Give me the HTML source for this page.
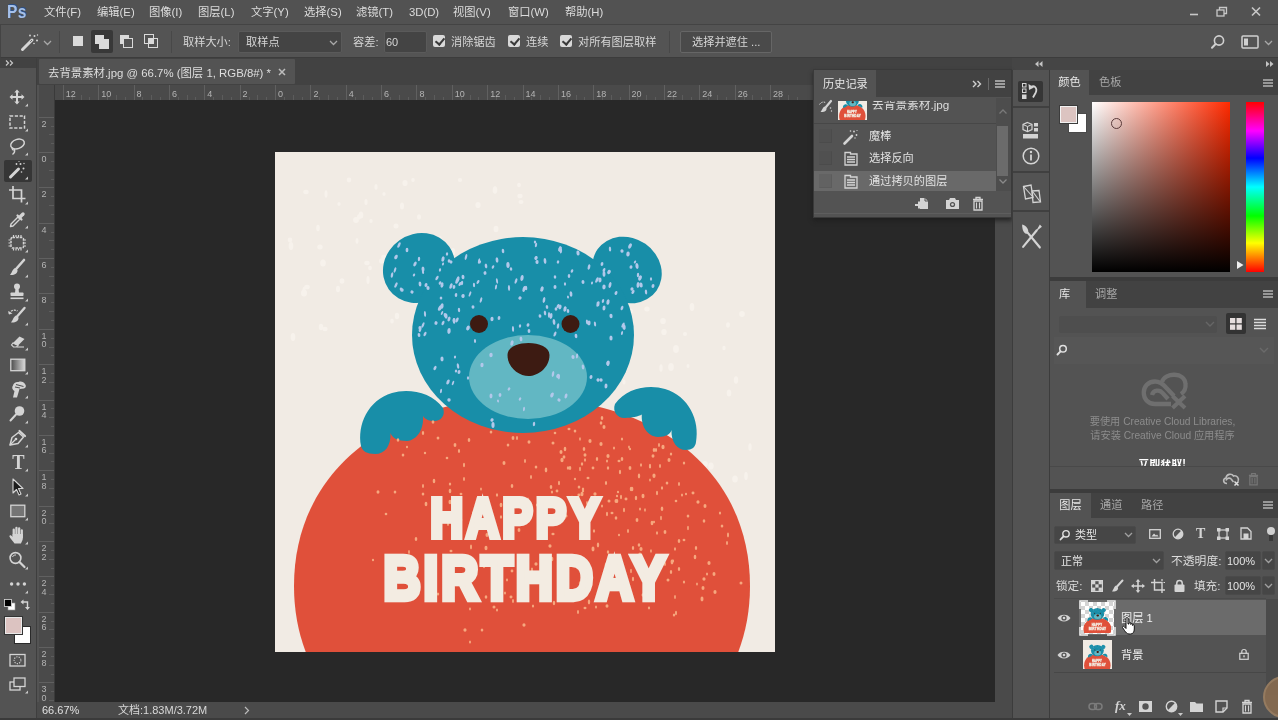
<!DOCTYPE html>
<html lang="zh-CN">
<head>
<meta charset="utf-8">
<title>去背景素材.jpg @ 66.7% (图层 1, RGB/8#) *</title>
<style>
*{box-sizing:border-box;margin:0;padding:0}
html,body{width:1278px;height:720px;overflow:hidden;background:#535353}
body{will-change:transform;position:relative;font-family:"Liberation Sans","Noto Sans CJK SC",sans-serif;font-size:11.200px;color:#d8d8d8;line-height:1}
.abs{position:absolute}
.t{position:absolute;white-space:nowrap;line-height:14px;height:14px}
svg{position:absolute;overflow:visible}
/* menubar */
#menubar{left:0;top:0;width:1278px;height:25px;background:#525252;border-bottom:1px solid #444}
#menubar .t{top:5px;font-size:11.300px;color:#dcdcdc}
#ps{left:7px;top:1px;font-size:18px;font-weight:bold;color:#a4c0ea;line-height:22px;height:22px;letter-spacing:0.500px;transform:scaleX(.86);transform-origin:0 0;text-shadow:1px -1px 0 #2c4f86}
/* options bar */
#optbar{left:0;top:25px;width:1278px;height:33px;background:#545454;border-bottom:1px solid #3c3c3c;border-left:1px solid #444}
#optbar .t{top:10px;color:#d6d6d6}
.field{position:absolute;background:#444;border:1px solid #5a5a5a;border-radius:2px}
.cb{position:absolute;width:12px;height:12px;background:#d9d9d9;border-radius:2px}
.cb::after{content:"";position:absolute;left:3.5px;top:1px;width:4px;height:7px;border:solid #3a3a3a;border-width:0 2px 2px 0;transform:rotate(40deg)}
.vsep{position:absolute;width:1px;background:#484848}
/* tab bar */
#tabbar{left:37px;top:58px;width:975px;height:27px;background:#424242}
#doctab{left:2px;top:1px;width:256px;height:25px;background:#535353;border-radius:1px}
/* tools */
#tools{left:0;top:58px;width:37px;height:662px;background:#535353;border-right:1px solid #3e3e3e}
#toolhdr{left:0;top:0;width:36px;height:10px;background:#424242}
/* rulers */
#hruler{left:39px;top:85px;width:956px;height:16px;background:#4a4a4a;border-bottom:1px solid #3a3a3a;overflow:hidden}
#vruler{left:39px;top:100px;width:16px;height:602px;background:#4a4a4a;border-right:1px solid #3a3a3a;overflow:hidden}
.rn{position:absolute;font-size:9px;color:#b4b4b4;line-height:10px}
/* canvas */
#canvas{left:55px;top:100px;width:940px;height:602px;background:#282828}
#vscroll{left:995px;top:85px;width:17px;height:617px;background:#4a4a4a}
#statusbar{left:37px;top:702px;width:975px;height:18px;background:#4a4a4a}
/* dock */
#iconcol{left:1012px;top:70px;width:38px;height:650px;background:#535353;border-left:1px solid #3c3c3c;border-right:1px solid #3c3c3c}
#right{left:1050px;top:70px;width:228px;height:650px;background:#535353;overflow:hidden}
.ptabbar{position:absolute;left:0;width:228px;height:25px;background:#424242}
.ptab{position:absolute;top:0;height:25px;background:#535353;color:#e6e6e6;text-align:center;line-height:25px;font-size:11.200px}
.ptabi{position:absolute;top:0;height:25px;color:#a6a6a6;line-height:25px;font-size:11.200px}
</style>
</head>
<body>
<div id="menubar" class="abs">
 <div id="ps" class="abs">Ps</div>
 <span class="t" style="left:44px">文件(F)</span>
 <span class="t" style="left:97px">编辑(E)</span>
 <span class="t" style="left:149px">图像(I)</span>
 <span class="t" style="left:198px">图层(L)</span>
 <span class="t" style="left:251px">文字(Y)</span>
 <span class="t" style="left:304px">选择(S)</span>
 <span class="t" style="left:356px">滤镜(T)</span>
 <span class="t" style="left:409px">3D(D)</span>
 <span class="t" style="left:453px">视图(V)</span>
 <span class="t" style="left:508px">窗口(W)</span>
 <span class="t" style="left:565px">帮助(H)</span>
 <svg style="left:1188px;top:6px" width="80" height="14" viewBox="0 0 80 14"><path d="M2 8.5 H10" stroke="#c8c8c8" stroke-width="1.6"/><rect x="29" y="4" width="7" height="6" fill="none" stroke="#c8c8c8" stroke-width="1.3"/><path d="M31.5 4 V1.5 H38.5 V7.5 H36" fill="none" stroke="#c8c8c8" stroke-width="1.3"/><path d="M64 1.5 L72 9.5 M72 1.5 L64 9.5" stroke="#c8c8c8" stroke-width="1.6"/></svg>
</div>
<div id="optbar" class="abs">
 <!-- wand icon -->
 <svg style="left:19px;top:8px" width="20" height="18" viewBox="0 0 20 18"><path d="M2.5 16.5 L12 7" stroke="#d6d6d6" stroke-width="3" stroke-linecap="round"/><path d="M10.2 8.8 L12 7" stroke="#6a6a6a" stroke-width="1" /><g fill="#d6d6d6"><circle cx="14.5" cy="3" r="1"/><circle cx="17" cy="7.5" r="1"/><circle cx="10" cy="2.5" r=".9"/><circle cx="14" cy="10.5" r=".8"/><circle cx="17.5" cy="2" r=".7"/></g></svg>
 <svg style="left:42px;top:15px" width="9" height="6" viewBox="0 0 9 6"><path d="M1 1 L4.5 4.5 L8 1" fill="none" stroke="#a8a8a8" stroke-width="1.3"/></svg>
 <div class="vsep" style="left:58px;top:6px;height:22px"></div>
 <div class="abs" style="left:71.500px;top:11px;width:10px;height:10px;background:#dadada"></div>
 <div class="abs" style="left:90px;top:5px;width:22px;height:23px;background:#383838;border-radius:2px"></div>
 <div class="abs" style="left:94px;top:10px;width:9px;height:9px;background:#dadada"></div>
 <div class="abs" style="left:98px;top:14px;width:10px;height:10px;background:#dadada"></div>
 <div class="abs" style="left:119px;top:10px;width:9px;height:9px;background:#dadada"></div>
 <div class="abs" style="left:122px;top:13px;width:10px;height:10px;background:#545454;border:1.5px solid #dadada"></div>
 <div class="abs" style="left:143px;top:9px;width:10px;height:10px;border:1.5px solid #dadada"></div>
 <div class="abs" style="left:147px;top:13px;width:10px;height:10px;border:1.5px solid #dadada"></div>
 <div class="abs" style="left:148px;top:14px;width:4px;height:4px;background:#dadada"></div>
 <div class="vsep" style="left:170px;top:6px;height:22px"></div>
 <span class="t" style="left:182px">取样大小:</span>
 <div class="field" style="left:237px;top:6px;width:104px;height:22px"></div>
 <span class="t" style="left:245px">取样点</span>
 <svg style="left:328px;top:15px" width="9" height="6" viewBox="0 0 9 6"><path d="M1 1 L4.5 4.5 L8 1" fill="none" stroke="#a8a8a8" stroke-width="1.3"/></svg>
 <span class="t" style="left:352px">容差:</span>
 <div class="field" style="left:383px;top:6px;width:43px;height:22px"></div>
 <span class="t" style="left:385px;font-size:11px">60</span>
 <div class="cb" style="left:432px;top:10px"></div>
 <span class="t" style="left:450px">消除锯齿</span>
 <div class="cb" style="left:507px;top:10px"></div>
 <span class="t" style="left:525px">连续</span>
 <div class="cb" style="left:559px;top:10px"></div>
 <span class="t" style="left:577px">对所有图层取样</span>
 <div class="vsep" style="left:668px;top:6px;height:22px"></div>
 <div class="field" style="left:679px;top:6px;width:92px;height:22px;background:#4a4a4a;border-color:#666"></div>
 <span class="t" style="left:691px">选择并遮住 ...</span>
 <!-- search -->
 <svg style="left:1209px;top:9px" width="16" height="16" viewBox="0 0 16 16"><circle cx="9" cy="6.5" r="4.6" fill="none" stroke="#d0d0d0" stroke-width="1.6"/><path d="M5.6 10 L2 13.8" stroke="#d0d0d0" stroke-width="2" stroke-linecap="round"/></svg>
 <svg style="left:1240px;top:10px" width="18" height="14" viewBox="0 0 18 14"><rect x="1" y="1" width="16" height="12" rx="1" fill="none" stroke="#d0d0d0" stroke-width="1.5"/><rect x="3" y="3.5" width="4" height="7" fill="#d0d0d0"/></svg>
 <svg style="left:1263px;top:15px" width="9" height="6" viewBox="0 0 9 6"><path d="M1 1 L4.5 4.5 L8 1" fill="none" stroke="#a8a8a8" stroke-width="1.3"/></svg>
</div>
<div id="tools" class="abs"><div id="toolhdr" class="abs"></div><svg style="left:5px;top:2px" width="9" height="6" viewBox="0 0 9 6"><path d="M1 .5 L3.500 3 L1 5.500 M5 .5 L7.500 3 L5 5.500" fill="none" stroke="#c8c8c8" stroke-width="1.200"/></svg>
<svg style="left:5px;top:27.0px" width="24" height="24" viewBox="0 0 24 24"><g fill="#d4d4d4"><path d="M12 4.500 L14.700 7.500 H13 V11 H16.500 V9.300 L19.500 12 L16.500 14.700 V13 H13 V16.500 H14.700 L12 19.500 L9.300 16.500 H11 V13 H7.500 V14.700 L4.500 12 L7.500 9.300 V11 H11 V7.500 H9.300 Z"/></g><path d="M23 18.5 V21.5 H20 Z" fill="#c8c8c8"/></svg>
<svg style="left:5px;top:51.5px" width="24" height="24" viewBox="0 0 24 24"><rect x="5" y="6" width="14.5" height="12" fill="none" stroke="#d4d4d4" stroke-width="1.5" stroke-dasharray="3.2 1.6"/><path d="M23 18.5 V21.5 H20 Z" fill="#c8c8c8"/></svg>
<svg style="left:5px;top:76.0px" width="24" height="24" viewBox="0 0 24 24"><ellipse cx="12.5" cy="10" rx="7" ry="4.6" transform="rotate(-18 12.5 10)" fill="none" stroke="#d4d4d4" stroke-width="1.5"/><path d="M7.5 13.5 C6.500 15 8 16.500 9.5 15.5 C10 17.500 9 19.500 7.500 20.500" fill="none" stroke="#d4d4d4" stroke-width="1.4"/><path d="M23 18.5 V21.5 H20 Z" fill="#c8c8c8"/></svg>
<div class="abs" style="left:4px;top:101.5px;width:28px;height:22px;background:#363636;border-radius:2px"></div><svg style="left:5px;top:100.0px" width="24" height="24" viewBox="0 0 24 24"><path d="M5.500 19 L13.5 11" stroke="#d4d4d4" stroke-width="3" stroke-linecap="round"/><g fill="#d4d4d4"><circle cx="15.500" cy="6" r="1"/><circle cx="18.5" cy="10.500" r="1"/><circle cx="11.500" cy="6" r=".9"/><circle cx="16.500" cy="14" r=".8"/><circle cx="19" cy="5.500" r=".7"/><circle cx="14" cy="3.5" r=".6"/></g><path d="M23 18.5 V21.5 H20 Z" fill="#c8c8c8"/></svg>
<svg style="left:5px;top:124.5px" width="24" height="24" viewBox="0 0 24 24"><path d="M8 3 V15.500 H20.500 M4 7 H16.500 V19.500" fill="none" stroke="#d4d4d4" stroke-width="1.700"/><path d="M23 18.5 V21.5 H20 Z" fill="#c8c8c8"/></svg>
<svg style="left:5px;top:149.0px" width="24" height="24" viewBox="0 0 24 24"><path d="M5.500 19.500 L6 17 L13 10 L15 12 L8 19 Z" fill="none" stroke="#d4d4d4" stroke-width="1.4" stroke-linejoin="round"/><path d="M12.500 8.500 L16.500 12.500" stroke="#d4d4d4" stroke-width="2.2" stroke-linecap="round"/><path d="M15 10 L18 7" stroke="#d4d4d4" stroke-width="3.400" stroke-linecap="round"/><path d="M23 18.5 V21.5 H20 Z" fill="#c8c8c8"/></svg>
<svg style="left:5px;top:173.0px" width="24" height="24" viewBox="0 0 24 24"><rect x="6" y="6.500" width="12.5" height="10.5" rx="1.5" fill="none" stroke="#d4d4d4" stroke-width="1.500" stroke-dasharray="2.600 1"/><g stroke="#d4d4d4" stroke-width="1.2"><path d="M8.500 4 V6 M11 4 V6 M13.500 4 V6 M16 4 V6 M8.500 17.500 V19.500 M11 17.500 V19.500 M13.500 17.500 V19.500 M16 17.500 V19.500 M3.500 9 H5.500 M3.500 12 H5.500 M3.500 15 H5.500 M19 9 H21 M19 12 H21 M19 15 H21"/></g><path d="M23 18.5 V21.5 H20 Z" fill="#c8c8c8"/></svg>
<svg style="left:5px;top:197.5px" width="24" height="24" viewBox="0 0 24 24"><path d="M19 4 L11.500 12.500" stroke="#d4d4d4" stroke-width="2.600" stroke-linecap="round"/><path d="M10.500 12 C7.500 12.500 7.500 16 5 19 C9 19.500 13 17.500 12.500 14 Z" fill="#d4d4d4"/><path d="M23 18.5 V21.5 H20 Z" fill="#c8c8c8"/></svg>
<svg style="left:5px;top:222.0px" width="24" height="24" viewBox="0 0 24 24"><g fill="#d4d4d4"><circle cx="12" cy="6.500" r="3"/><path d="M10.500 8 H13.500 L14 13 H10 Z"/><rect x="5.500" y="12.500" width="13" height="3.500" rx="0.800"/><rect x="5.500" y="17.500" width="13" height="1.600"/></g><path d="M23 18.5 V21.5 H20 Z" fill="#c8c8c8"/></svg>
<svg style="left:5px;top:246.0px" width="24" height="24" viewBox="0 0 24 24"><path d="M19.500 4 L12.500 12" stroke="#d4d4d4" stroke-width="2.400" stroke-linecap="round"/><path d="M11.500 11.500 C8.500 12 8.500 15.500 6 18.500 C10 19 14 17 13.500 13.500 Z" fill="#d4d4d4"/><path d="M4 9.500 C6 6 10 5.500 12.500 7" fill="none" stroke="#d4d4d4" stroke-width="1.300" stroke-dasharray="2 1"/><path d="M3 7 L4 10.500 L7.500 9.500 Z" fill="#d4d4d4"/><path d="M23 18.5 V21.5 H20 Z" fill="#c8c8c8"/></svg>
<svg style="left:5px;top:270.5px" width="24" height="24" viewBox="0 0 24 24"><path d="M8 14 L14.500 7.500 L19.500 10 L13 16.500 Z" fill="#d4d4d4"/><path d="M8 14 L13 16.500 L11.500 18 H8.500 L6.500 16 Z" fill="none" stroke="#d4d4d4" stroke-width="1.100"/><path d="M12 18 H19" stroke="#d4d4d4" stroke-width="1.100"/><path d="M23 18.5 V21.5 H20 Z" fill="#c8c8c8"/></svg>
<svg style="left:5px;top:295.0px" width="24" height="24" viewBox="0 0 24 24"><defs><linearGradient id="tg" x1="0" x2="1"><stop offset="0" stop-color="#4a4a4a"/><stop offset="1" stop-color="#d8d8d8"/></linearGradient></defs><rect x="5.800" y="6.200" width="14" height="11.500" fill="url(#tg)" stroke="#d4d4d4" stroke-width="1.300"/><path d="M23 18.5 V21.5 H20 Z" fill="#c8c8c8"/></svg>
<svg style="left:5px;top:319.0px" width="24" height="24" viewBox="0 0 24 24"><path d="M8 20.500 L9.500 14 C7.500 13 6.500 10.500 8 8.500 C8.500 6 11 4.500 13.500 5 C16 4 19 5 20 7 C21.500 8.500 21 11 19 11.500 L14.500 12 L12 20.500 Z" fill="#d4d4d4"/><path d="M11 7.500 L18.500 9.500 M10 10 L15 11" stroke="#535353" stroke-width="1.100"/><path d="M23 18.5 V21.5 H20 Z" fill="#c8c8c8"/></svg>
<svg style="left:5px;top:343.5px" width="24" height="24" viewBox="0 0 24 24"><circle cx="14.500" cy="9" r="4.800" fill="#d4d4d4"/><path d="M11 12.500 L5.500 18.500" stroke="#d4d4d4" stroke-width="2" stroke-linecap="round"/><path d="M23 18.5 V21.5 H20 Z" fill="#c8c8c8"/></svg>
<svg style="left:5px;top:368.0px" width="24" height="24" viewBox="0 0 24 24"><path d="M5 19 L7 11.500 L13.500 6.500 L18.500 11 L13 17.500 Z" fill="none" stroke="#d4d4d4" stroke-width="1.500" stroke-linejoin="round"/><path d="M5 19 L10.500 13.500" stroke="#d4d4d4" stroke-width="1.200"/><circle cx="11" cy="13" r="1.300" fill="#d4d4d4"/><path d="M14.500 5 L20 10" stroke="#d4d4d4" stroke-width="2.200" stroke-linecap="round"/><path d="M23 18.5 V21.5 H20 Z" fill="#c8c8c8"/></svg>
<svg style="left:5px;top:392.0px" width="24" height="24" viewBox="0 0 24 24"><text x="15" y="19" text-anchor="middle" transform="scale(.9 1)" font-family="Liberation Serif,serif" font-size="20.500" font-weight="bold" fill="#d4d4d4">T</text><path d="M23 18.5 V21.5 H20 Z" fill="#c8c8c8"/></svg>
<svg style="left:5px;top:417.0px" width="24" height="24" viewBox="0 0 24 24"><path d="M8 4 V18 L11.500 14.500 L14 20 L16 19 L13.500 13.500 H18 Z" fill="#1c1c1c" stroke="#d4d4d4" stroke-width="1.100" stroke-linejoin="round"/><path d="M23 18.5 V21.5 H20 Z" fill="#c8c8c8"/></svg>
<svg style="left:5px;top:441.0px" width="24" height="24" viewBox="0 0 24 24"><rect x="5.800" y="6.200" width="14" height="11.500" fill="#757575" stroke="#d4d4d4" stroke-width="1.300"/><path d="M23 18.5 V21.5 H20 Z" fill="#c8c8c8"/></svg>
<svg style="left:5px;top:465.0px" width="24" height="24" viewBox="0 0 24 24"><g fill="#d4d4d4"><rect x="7.600" y="5.500" width="2.300" height="9" rx="1.150"/><rect x="10.300" y="3.800" width="2.300" height="10" rx="1.150"/><rect x="13" y="4.300" width="2.300" height="10" rx="1.150"/><rect x="15.700" y="6.300" width="2.200" height="9" rx="1.100"/><path d="M7.600 11 H17.900 V14.500 C17.900 17.500 16.500 19 16 20.500 H9.500 C8 18 5.500 16 4.300 13.200 C4.800 11.800 6.300 12.200 7.600 14 Z"/></g><path d="M23 18.5 V21.5 H20 Z" fill="#c8c8c8"/></svg>
<svg style="left:5px;top:489.5px" width="24" height="24" viewBox="0 0 24 24"><circle cx="10.500" cy="10" r="5.400" fill="none" stroke="#d4d4d4" stroke-width="1.600"/><path d="M14.500 14 L19.500 19" stroke="#d4d4d4" stroke-width="2.200" stroke-linecap="round"/><path d="M7.500 9 C8 7.500 9.500 6.800 11 7" fill="none" stroke="#d4d4d4" stroke-width="1"/><path d="M23 18.5 V21.5 H20 Z" fill="#c8c8c8"/></svg>
<svg style="left:5px;top:514.0px" width="24" height="24" viewBox="0 0 24 24"><g fill="#d4d4d4"><circle cx="6.600" cy="12" r="1.700"/><circle cx="13" cy="12" r="1.700"/><circle cx="19.400" cy="12" r="1.700"/></g><path d="M23 18.5 V21.5 H20 Z" fill="#c8c8c8"/></svg>
<svg style="left:3px;top:540px" width="30" height="14" viewBox="0 0 30 14"><rect x="5" y="5" width="7" height="7" fill="#fff" stroke="#999" stroke-width=".600"/><rect x="1.500" y="1.500" width="7" height="7" fill="#000" stroke="#ddd" stroke-width=".800"/><path d="M19.500 4 H24.500 V10" fill="none" stroke="#d4d4d4" stroke-width="1.400"/><path d="M20.500 1.500 L17.500 4 L20.500 6.500 Z M22 9 L24.500 12 L27 9 Z" fill="#d4d4d4"/></svg>
<div class="abs" style="left:14px;top:567.5px;width:17px;height:18px;background:#fff;border:1px solid #2a2a2a"></div><div class="abs" style="left:5px;top:558.5px;width:17px;height:17px;background:#dcc3c1;border:1px solid #e8e8e8;box-shadow:0 0 0 1px #333"></div>
<svg style="left:5px;top:590px" width="24" height="24" viewBox="0 0 24 24"><rect x="5" y="6.500" width="15" height="11.500" fill="none" stroke="#d4d4d4" stroke-width="1.300"/><circle cx="12.500" cy="12.200" r="3.400" fill="none" stroke="#d4d4d4" stroke-width="1.100" stroke-dasharray="1.200 1.200"/></svg>
<svg style="left:5px;top:614px" width="24" height="24" viewBox="0 0 24 24"><rect x="5" y="10" width="10" height="8" fill="none" stroke="#d4d4d4" stroke-width="1.300"/><rect x="9" y="6" width="11" height="8.500" fill="#535353" stroke="#d4d4d4" stroke-width="1.300"/><path d="M23 18.500 V21.500 H20 Z" fill="#c8c8c8"/></svg>
</div>
<div id="tabbar" class="abs"><div id="doctab" class="abs"></div><span class="t" style="left:11px;top:8px;color:#dedede;font-size:11.400px">去背景素材.jpg @ 66.7% (图层 1, RGB/8#) *</span><svg style="left:241px;top:10px" width="8" height="8" viewBox="0 0 8 8"><path d="M1 1 L7 7 M7 1 L1 7" stroke="#bdbdbd" stroke-width="1.500"/></svg></div>
<div id="hruler" class="abs"><div class="abs" style="left:23.8px;top:0;width:1px;height:15px;background:#606060"></div><span class="rn" style="left:26.8px;top:4px">12</span><div class="abs" style="left:32.7px;top:12px;width:1px;height:3px;background:#5c5c5c"></div><div class="abs" style="left:41.5px;top:10px;width:1px;height:5px;background:#5c5c5c"></div><div class="abs" style="left:50.4px;top:12px;width:1px;height:3px;background:#5c5c5c"></div><div class="abs" style="left:59.2px;top:0;width:1px;height:15px;background:#606060"></div><span class="rn" style="left:62.2px;top:4px">10</span><div class="abs" style="left:68.0px;top:12px;width:1px;height:3px;background:#5c5c5c"></div><div class="abs" style="left:76.9px;top:10px;width:1px;height:5px;background:#5c5c5c"></div><div class="abs" style="left:85.7px;top:12px;width:1px;height:3px;background:#5c5c5c"></div><div class="abs" style="left:94.6px;top:0;width:1px;height:15px;background:#606060"></div><span class="rn" style="left:97.6px;top:4px">8</span><div class="abs" style="left:103.4px;top:12px;width:1px;height:3px;background:#5c5c5c"></div><div class="abs" style="left:112.2px;top:10px;width:1px;height:5px;background:#5c5c5c"></div><div class="abs" style="left:121.1px;top:12px;width:1px;height:3px;background:#5c5c5c"></div><div class="abs" style="left:129.9px;top:0;width:1px;height:15px;background:#606060"></div><span class="rn" style="left:132.9px;top:4px">6</span><div class="abs" style="left:138.8px;top:12px;width:1px;height:3px;background:#5c5c5c"></div><div class="abs" style="left:147.6px;top:10px;width:1px;height:5px;background:#5c5c5c"></div><div class="abs" style="left:156.4px;top:12px;width:1px;height:3px;background:#5c5c5c"></div><div class="abs" style="left:165.3px;top:0;width:1px;height:15px;background:#606060"></div><span class="rn" style="left:168.3px;top:4px">4</span><div class="abs" style="left:174.1px;top:12px;width:1px;height:3px;background:#5c5c5c"></div><div class="abs" style="left:183.0px;top:10px;width:1px;height:5px;background:#5c5c5c"></div><div class="abs" style="left:191.8px;top:12px;width:1px;height:3px;background:#5c5c5c"></div><div class="abs" style="left:200.6px;top:0;width:1px;height:15px;background:#606060"></div><span class="rn" style="left:203.6px;top:4px">2</span><div class="abs" style="left:209.5px;top:12px;width:1px;height:3px;background:#5c5c5c"></div><div class="abs" style="left:218.3px;top:10px;width:1px;height:5px;background:#5c5c5c"></div><div class="abs" style="left:227.2px;top:12px;width:1px;height:3px;background:#5c5c5c"></div><div class="abs" style="left:236.0px;top:0;width:1px;height:15px;background:#606060"></div><span class="rn" style="left:239.0px;top:4px">0</span><div class="abs" style="left:244.8px;top:12px;width:1px;height:3px;background:#5c5c5c"></div><div class="abs" style="left:253.7px;top:10px;width:1px;height:5px;background:#5c5c5c"></div><div class="abs" style="left:262.5px;top:12px;width:1px;height:3px;background:#5c5c5c"></div><div class="abs" style="left:271.4px;top:0;width:1px;height:15px;background:#606060"></div><span class="rn" style="left:274.4px;top:4px">2</span><div class="abs" style="left:280.2px;top:12px;width:1px;height:3px;background:#5c5c5c"></div><div class="abs" style="left:289.0px;top:10px;width:1px;height:5px;background:#5c5c5c"></div><div class="abs" style="left:297.9px;top:12px;width:1px;height:3px;background:#5c5c5c"></div><div class="abs" style="left:306.7px;top:0;width:1px;height:15px;background:#606060"></div><span class="rn" style="left:309.7px;top:4px">4</span><div class="abs" style="left:315.6px;top:12px;width:1px;height:3px;background:#5c5c5c"></div><div class="abs" style="left:324.4px;top:10px;width:1px;height:5px;background:#5c5c5c"></div><div class="abs" style="left:333.2px;top:12px;width:1px;height:3px;background:#5c5c5c"></div><div class="abs" style="left:342.1px;top:0;width:1px;height:15px;background:#606060"></div><span class="rn" style="left:345.1px;top:4px">6</span><div class="abs" style="left:350.9px;top:12px;width:1px;height:3px;background:#5c5c5c"></div><div class="abs" style="left:359.8px;top:10px;width:1px;height:5px;background:#5c5c5c"></div><div class="abs" style="left:368.6px;top:12px;width:1px;height:3px;background:#5c5c5c"></div><div class="abs" style="left:377.4px;top:0;width:1px;height:15px;background:#606060"></div><span class="rn" style="left:380.4px;top:4px">8</span><div class="abs" style="left:386.3px;top:12px;width:1px;height:3px;background:#5c5c5c"></div><div class="abs" style="left:395.1px;top:10px;width:1px;height:5px;background:#5c5c5c"></div><div class="abs" style="left:404.0px;top:12px;width:1px;height:3px;background:#5c5c5c"></div><div class="abs" style="left:412.8px;top:0;width:1px;height:15px;background:#606060"></div><span class="rn" style="left:415.8px;top:4px">10</span><div class="abs" style="left:421.6px;top:12px;width:1px;height:3px;background:#5c5c5c"></div><div class="abs" style="left:430.5px;top:10px;width:1px;height:5px;background:#5c5c5c"></div><div class="abs" style="left:439.3px;top:12px;width:1px;height:3px;background:#5c5c5c"></div><div class="abs" style="left:448.2px;top:0;width:1px;height:15px;background:#606060"></div><span class="rn" style="left:451.2px;top:4px">12</span><div class="abs" style="left:457.0px;top:12px;width:1px;height:3px;background:#5c5c5c"></div><div class="abs" style="left:465.8px;top:10px;width:1px;height:5px;background:#5c5c5c"></div><div class="abs" style="left:474.7px;top:12px;width:1px;height:3px;background:#5c5c5c"></div><div class="abs" style="left:483.5px;top:0;width:1px;height:15px;background:#606060"></div><span class="rn" style="left:486.5px;top:4px">14</span><div class="abs" style="left:492.4px;top:12px;width:1px;height:3px;background:#5c5c5c"></div><div class="abs" style="left:501.2px;top:10px;width:1px;height:5px;background:#5c5c5c"></div><div class="abs" style="left:510.0px;top:12px;width:1px;height:3px;background:#5c5c5c"></div><div class="abs" style="left:518.9px;top:0;width:1px;height:15px;background:#606060"></div><span class="rn" style="left:521.9px;top:4px">16</span><div class="abs" style="left:527.7px;top:12px;width:1px;height:3px;background:#5c5c5c"></div><div class="abs" style="left:536.6px;top:10px;width:1px;height:5px;background:#5c5c5c"></div><div class="abs" style="left:545.4px;top:12px;width:1px;height:3px;background:#5c5c5c"></div><div class="abs" style="left:554.2px;top:0;width:1px;height:15px;background:#606060"></div><span class="rn" style="left:557.2px;top:4px">18</span><div class="abs" style="left:563.1px;top:12px;width:1px;height:3px;background:#5c5c5c"></div><div class="abs" style="left:571.9px;top:10px;width:1px;height:5px;background:#5c5c5c"></div><div class="abs" style="left:580.8px;top:12px;width:1px;height:3px;background:#5c5c5c"></div><div class="abs" style="left:589.6px;top:0;width:1px;height:15px;background:#606060"></div><span class="rn" style="left:592.6px;top:4px">20</span><div class="abs" style="left:598.4px;top:12px;width:1px;height:3px;background:#5c5c5c"></div><div class="abs" style="left:607.3px;top:10px;width:1px;height:5px;background:#5c5c5c"></div><div class="abs" style="left:616.1px;top:12px;width:1px;height:3px;background:#5c5c5c"></div><div class="abs" style="left:625.0px;top:0;width:1px;height:15px;background:#606060"></div><span class="rn" style="left:628.0px;top:4px">22</span><div class="abs" style="left:633.8px;top:12px;width:1px;height:3px;background:#5c5c5c"></div><div class="abs" style="left:642.6px;top:10px;width:1px;height:5px;background:#5c5c5c"></div><div class="abs" style="left:651.5px;top:12px;width:1px;height:3px;background:#5c5c5c"></div><div class="abs" style="left:660.3px;top:0;width:1px;height:15px;background:#606060"></div><span class="rn" style="left:663.3px;top:4px">24</span><div class="abs" style="left:669.2px;top:12px;width:1px;height:3px;background:#5c5c5c"></div><div class="abs" style="left:678.0px;top:10px;width:1px;height:5px;background:#5c5c5c"></div><div class="abs" style="left:686.8px;top:12px;width:1px;height:3px;background:#5c5c5c"></div><div class="abs" style="left:695.7px;top:0;width:1px;height:15px;background:#606060"></div><span class="rn" style="left:698.7px;top:4px">26</span><div class="abs" style="left:704.5px;top:12px;width:1px;height:3px;background:#5c5c5c"></div><div class="abs" style="left:713.4px;top:10px;width:1px;height:5px;background:#5c5c5c"></div><div class="abs" style="left:722.2px;top:12px;width:1px;height:3px;background:#5c5c5c"></div><div class="abs" style="left:731.0px;top:0;width:1px;height:15px;background:#606060"></div><span class="rn" style="left:734.0px;top:4px">28</span><div class="abs" style="left:739.9px;top:12px;width:1px;height:3px;background:#5c5c5c"></div><div class="abs" style="left:748.7px;top:10px;width:1px;height:5px;background:#5c5c5c"></div><div class="abs" style="left:757.6px;top:12px;width:1px;height:3px;background:#5c5c5c"></div></div>
<div class="abs" style="left:39px;top:85px;width:16px;height:16px;background:#4a4a4a;border-right:1px solid #3a3a3a;border-bottom:1px solid #3a3a3a"></div>
<div id="vruler" class="abs"><div class="abs" style="left:0;top:16.6px;width:15px;height:1px;background:#606060"></div><span class="rn" style="left:2.500px;top:18.6px">2</span><div class="abs" style="left:12px;top:25.5px;width:3px;height:1px;background:#5c5c5c"></div><div class="abs" style="left:10px;top:34.3px;width:5px;height:1px;background:#5c5c5c"></div><div class="abs" style="left:12px;top:43.2px;width:3px;height:1px;background:#5c5c5c"></div><div class="abs" style="left:0;top:52.0px;width:15px;height:1px;background:#606060"></div><span class="rn" style="left:2.500px;top:54.0px">0</span><div class="abs" style="left:12px;top:60.8px;width:3px;height:1px;background:#5c5c5c"></div><div class="abs" style="left:10px;top:69.7px;width:5px;height:1px;background:#5c5c5c"></div><div class="abs" style="left:12px;top:78.5px;width:3px;height:1px;background:#5c5c5c"></div><div class="abs" style="left:0;top:87.4px;width:15px;height:1px;background:#606060"></div><span class="rn" style="left:2.500px;top:89.4px">2</span><div class="abs" style="left:12px;top:96.2px;width:3px;height:1px;background:#5c5c5c"></div><div class="abs" style="left:10px;top:105.0px;width:5px;height:1px;background:#5c5c5c"></div><div class="abs" style="left:12px;top:113.9px;width:3px;height:1px;background:#5c5c5c"></div><div class="abs" style="left:0;top:122.7px;width:15px;height:1px;background:#606060"></div><span class="rn" style="left:2.500px;top:124.7px">4</span><div class="abs" style="left:12px;top:131.6px;width:3px;height:1px;background:#5c5c5c"></div><div class="abs" style="left:10px;top:140.4px;width:5px;height:1px;background:#5c5c5c"></div><div class="abs" style="left:12px;top:149.2px;width:3px;height:1px;background:#5c5c5c"></div><div class="abs" style="left:0;top:158.1px;width:15px;height:1px;background:#606060"></div><span class="rn" style="left:2.500px;top:160.1px">6</span><div class="abs" style="left:12px;top:166.9px;width:3px;height:1px;background:#5c5c5c"></div><div class="abs" style="left:10px;top:175.8px;width:5px;height:1px;background:#5c5c5c"></div><div class="abs" style="left:12px;top:184.6px;width:3px;height:1px;background:#5c5c5c"></div><div class="abs" style="left:0;top:193.4px;width:15px;height:1px;background:#606060"></div><span class="rn" style="left:2.500px;top:195.4px">8</span><div class="abs" style="left:12px;top:202.3px;width:3px;height:1px;background:#5c5c5c"></div><div class="abs" style="left:10px;top:211.1px;width:5px;height:1px;background:#5c5c5c"></div><div class="abs" style="left:12px;top:220.0px;width:3px;height:1px;background:#5c5c5c"></div><div class="abs" style="left:0;top:228.8px;width:15px;height:1px;background:#606060"></div><span class="rn" style="left:2.500px;top:230.8px">1</span><span class="rn" style="left:2.500px;top:239.3px">0</span><div class="abs" style="left:12px;top:237.6px;width:3px;height:1px;background:#5c5c5c"></div><div class="abs" style="left:10px;top:246.5px;width:5px;height:1px;background:#5c5c5c"></div><div class="abs" style="left:12px;top:255.3px;width:3px;height:1px;background:#5c5c5c"></div><div class="abs" style="left:0;top:264.2px;width:15px;height:1px;background:#606060"></div><span class="rn" style="left:2.500px;top:266.2px">1</span><span class="rn" style="left:2.500px;top:274.7px">2</span><div class="abs" style="left:12px;top:273.0px;width:3px;height:1px;background:#5c5c5c"></div><div class="abs" style="left:10px;top:281.8px;width:5px;height:1px;background:#5c5c5c"></div><div class="abs" style="left:12px;top:290.7px;width:3px;height:1px;background:#5c5c5c"></div><div class="abs" style="left:0;top:299.5px;width:15px;height:1px;background:#606060"></div><span class="rn" style="left:2.500px;top:301.5px">1</span><span class="rn" style="left:2.500px;top:310.0px">4</span><div class="abs" style="left:12px;top:308.4px;width:3px;height:1px;background:#5c5c5c"></div><div class="abs" style="left:10px;top:317.2px;width:5px;height:1px;background:#5c5c5c"></div><div class="abs" style="left:12px;top:326.0px;width:3px;height:1px;background:#5c5c5c"></div><div class="abs" style="left:0;top:334.9px;width:15px;height:1px;background:#606060"></div><span class="rn" style="left:2.500px;top:336.9px">1</span><span class="rn" style="left:2.500px;top:345.4px">6</span><div class="abs" style="left:12px;top:343.7px;width:3px;height:1px;background:#5c5c5c"></div><div class="abs" style="left:10px;top:352.6px;width:5px;height:1px;background:#5c5c5c"></div><div class="abs" style="left:12px;top:361.4px;width:3px;height:1px;background:#5c5c5c"></div><div class="abs" style="left:0;top:370.2px;width:15px;height:1px;background:#606060"></div><span class="rn" style="left:2.500px;top:372.2px">1</span><span class="rn" style="left:2.500px;top:380.7px">8</span><div class="abs" style="left:12px;top:379.1px;width:3px;height:1px;background:#5c5c5c"></div><div class="abs" style="left:10px;top:387.9px;width:5px;height:1px;background:#5c5c5c"></div><div class="abs" style="left:12px;top:396.8px;width:3px;height:1px;background:#5c5c5c"></div><div class="abs" style="left:0;top:405.6px;width:15px;height:1px;background:#606060"></div><span class="rn" style="left:2.500px;top:407.6px">2</span><span class="rn" style="left:2.500px;top:416.1px">0</span><div class="abs" style="left:12px;top:414.4px;width:3px;height:1px;background:#5c5c5c"></div><div class="abs" style="left:10px;top:423.3px;width:5px;height:1px;background:#5c5c5c"></div><div class="abs" style="left:12px;top:432.1px;width:3px;height:1px;background:#5c5c5c"></div><div class="abs" style="left:0;top:441.0px;width:15px;height:1px;background:#606060"></div><span class="rn" style="left:2.500px;top:443.0px">2</span><span class="rn" style="left:2.500px;top:451.5px">2</span><div class="abs" style="left:12px;top:449.8px;width:3px;height:1px;background:#5c5c5c"></div><div class="abs" style="left:10px;top:458.6px;width:5px;height:1px;background:#5c5c5c"></div><div class="abs" style="left:12px;top:467.5px;width:3px;height:1px;background:#5c5c5c"></div><div class="abs" style="left:0;top:476.3px;width:15px;height:1px;background:#606060"></div><span class="rn" style="left:2.500px;top:478.3px">2</span><span class="rn" style="left:2.500px;top:486.8px">4</span><div class="abs" style="left:12px;top:485.2px;width:3px;height:1px;background:#5c5c5c"></div><div class="abs" style="left:10px;top:494.0px;width:5px;height:1px;background:#5c5c5c"></div><div class="abs" style="left:12px;top:502.8px;width:3px;height:1px;background:#5c5c5c"></div><div class="abs" style="left:0;top:511.7px;width:15px;height:1px;background:#606060"></div><span class="rn" style="left:2.500px;top:513.7px">2</span><span class="rn" style="left:2.500px;top:522.2px">6</span><div class="abs" style="left:12px;top:520.5px;width:3px;height:1px;background:#5c5c5c"></div><div class="abs" style="left:10px;top:529.4px;width:5px;height:1px;background:#5c5c5c"></div><div class="abs" style="left:12px;top:538.2px;width:3px;height:1px;background:#5c5c5c"></div><div class="abs" style="left:0;top:547.0px;width:15px;height:1px;background:#606060"></div><span class="rn" style="left:2.500px;top:549.0px">2</span><span class="rn" style="left:2.500px;top:557.5px">8</span><div class="abs" style="left:12px;top:555.9px;width:3px;height:1px;background:#5c5c5c"></div><div class="abs" style="left:10px;top:564.7px;width:5px;height:1px;background:#5c5c5c"></div><div class="abs" style="left:12px;top:573.6px;width:3px;height:1px;background:#5c5c5c"></div><div class="abs" style="left:0;top:582.4px;width:15px;height:1px;background:#606060"></div><span class="rn" style="left:2.500px;top:584.4px">3</span><span class="rn" style="left:2.500px;top:592.9px">0</span><div class="abs" style="left:12px;top:591.2px;width:3px;height:1px;background:#5c5c5c"></div><div class="abs" style="left:10px;top:600.1px;width:5px;height:1px;background:#5c5c5c"></div><div class="abs" style="left:12px;top:608.9px;width:3px;height:1px;background:#5c5c5c"></div></div>
<div id="vscroll" class="abs"></div>
<div id="statusbar" class="abs"><span class="t" style="left:5px;top:1px;font-size:11px;color:#e0e0e0">66.67%</span><span class="t" style="left:81px;top:1px;font-size:11px;color:#d8d8d8">文档:1.83M/3.72M</span><svg style="left:207px;top:4px" width="6" height="9" viewBox="0 0 6 9"><path d="M1 1 L4.500 4.500 L1 8" fill="none" stroke="#bbb" stroke-width="1.200"/></svg></div>
<div id="canvas" class="abs"><svg width="0" height="0" style="left:0;top:0"><defs><symbol id="art" viewBox="0 0 500 500"><rect width="500" height="500" fill="#f1ebe4"/><g fill="#f7f2ec"><ellipse cx="91" cy="50" rx="1.6" ry="3.1"/><ellipse cx="101" cy="35" rx="1.6" ry="2.9"/><ellipse cx="31" cy="40" rx="2.7" ry="2.2"/><ellipse cx="67" cy="129" rx="2.4" ry="2.8"/><ellipse cx="244" cy="33" rx="1.9" ry="2.3"/><ellipse cx="43" cy="76" rx="1.8" ry="3.2"/><ellipse cx="165" cy="86" rx="1.6" ry="2.1"/><ellipse cx="63" cy="137" rx="2.0" ry="3.2"/><ellipse cx="121" cy="74" rx="2.5" ry="2.5"/><ellipse cx="150" cy="112" rx="2.6" ry="2.6"/><ellipse cx="245" cy="44" rx="2.6" ry="2.3"/><ellipse cx="130" cy="31" rx="2.6" ry="3.1"/><ellipse cx="221" cy="77" rx="2.4" ry="3.2"/><ellipse cx="122" cy="164" rx="2.2" ry="3.3"/><ellipse cx="29" cy="141" rx="3.0" ry="3.6"/><ellipse cx="82" cy="89" rx="1.5" ry="2.9"/><ellipse cx="453" cy="173" rx="1.9" ry="2.8"/><ellipse cx="220" cy="38" rx="2.3" ry="3.8"/><ellipse cx="396" cy="215" rx="2.8" ry="3.9"/><ellipse cx="367" cy="237" rx="2.4" ry="2.5"/><ellipse cx="16" cy="94" rx="2.3" ry="3.9"/><ellipse cx="177" cy="110" rx="2.5" ry="2.1"/><ellipse cx="226" cy="154" rx="2.7" ry="2.8"/><ellipse cx="109" cy="42" rx="1.6" ry="2.1"/><ellipse cx="64" cy="52" rx="1.6" ry="2.0"/><ellipse cx="51" cy="42" rx="1.5" ry="3.7"/><ellipse cx="386" cy="216" rx="1.7" ry="3.7"/><ellipse cx="248" cy="102" rx="1.6" ry="2.2"/><ellipse cx="96" cy="69" rx="1.7" ry="2.0"/><ellipse cx="417" cy="155" rx="2.3" ry="4.0"/><ellipse cx="389" cy="180" rx="2.7" ry="3.1"/><ellipse cx="460" cy="327" rx="2.8" ry="3.6"/><ellipse cx="413" cy="214" rx="1.5" ry="2.1"/><ellipse cx="81" cy="68" rx="2.9" ry="2.9"/><ellipse cx="235" cy="188" rx="2.0" ry="2.4"/><ellipse cx="430" cy="312" rx="2.8" ry="3.0"/><ellipse cx="436" cy="314" rx="2.7" ry="3.5"/><ellipse cx="127" cy="54" rx="2.0" ry="3.6"/><ellipse cx="243" cy="90" rx="2.9" ry="3.4"/><ellipse cx="475" cy="295" rx="1.7" ry="3.7"/><ellipse cx="245" cy="133" rx="2.3" ry="2.3"/><ellipse cx="18" cy="185" rx="2.3" ry="3.9"/><ellipse cx="117" cy="169" rx="1.8" ry="2.5"/><ellipse cx="84" cy="65" rx="1.9" ry="2.8"/><ellipse cx="46" cy="175" rx="2.2" ry="3.2"/><ellipse cx="228" cy="94" rx="2.3" ry="3.1"/><ellipse cx="138" cy="28" rx="1.8" ry="2.0"/><ellipse cx="203" cy="53" rx="2.6" ry="3.1"/><ellipse cx="92" cy="111" rx="2.7" ry="2.2"/><ellipse cx="454" cy="241" rx="2.3" ry="3.5"/><ellipse cx="229" cy="98" rx="2.3" ry="3.0"/><ellipse cx="178" cy="100" rx="2.2" ry="3.9"/><ellipse cx="179" cy="170" rx="1.9" ry="3.1"/><ellipse cx="349" cy="230" rx="1.6" ry="2.5"/><ellipse cx="32" cy="135" rx="2.8" ry="2.3"/><ellipse cx="471" cy="324" rx="1.8" ry="3.9"/><ellipse cx="109" cy="105" rx="2.7" ry="2.3"/><ellipse cx="116" cy="110" rx="1.8" ry="2.6"/><ellipse cx="185" cy="28" rx="2.2" ry="2.0"/><ellipse cx="93" cy="128" rx="1.6" ry="4.0"/><ellipse cx="372" cy="157" rx="2.7" ry="2.5"/><ellipse cx="45" cy="95" rx="2.7" ry="2.5"/><ellipse cx="50" cy="177" rx="2.6" ry="2.2"/><ellipse cx="29" cy="139" rx="1.6" ry="3.9"/><ellipse cx="467" cy="162" rx="2.8" ry="2.9"/><ellipse cx="95" cy="116" rx="1.9" ry="2.3"/><ellipse cx="356" cy="159" rx="1.8" ry="2.6"/><ellipse cx="410" cy="182" rx="2.0" ry="2.0"/><ellipse cx="74" cy="28" rx="2.3" ry="2.4"/><ellipse cx="461" cy="228" rx="2.2" ry="3.7"/><ellipse cx="107" cy="109" rx="3.0" ry="2.7"/><ellipse cx="211" cy="142" rx="2.1" ry="2.7"/><ellipse cx="449" cy="196" rx="1.7" ry="2.2"/><ellipse cx="213" cy="169" rx="1.9" ry="2.5"/><ellipse cx="401" cy="197" rx="2.9" ry="3.9"/><ellipse cx="144" cy="65" rx="2.0" ry="2.7"/><ellipse cx="15" cy="88" rx="2.3" ry="2.4"/><ellipse cx="344" cy="222" rx="1.6" ry="2.0"/><ellipse cx="86" cy="63" rx="2.3" ry="3.5"/><ellipse cx="170" cy="143" rx="2.1" ry="2.7"/><ellipse cx="246" cy="50" rx="2.5" ry="2.1"/><ellipse cx="211" cy="172" rx="2.6" ry="3.6"/><ellipse cx="48" cy="111" rx="2.8" ry="3.6"/><ellipse cx="209" cy="121" rx="2.5" ry="3.4"/><ellipse cx="388" cy="169" rx="2.8" ry="3.1"/><ellipse cx="163" cy="128" rx="2.2" ry="2.0"/><ellipse cx="202" cy="148" rx="2.3" ry="3.3"/><ellipse cx="342" cy="198" rx="2.6" ry="2.4"/><ellipse cx="189" cy="186" rx="2.1" ry="3.0"/><ellipse cx="176" cy="152" rx="2.5" ry="2.2"/></g><path d="M19 434 C19 321.2 110.20000000000002 246 247 246 C383.79999999999995 246 475 321.2 475 434 C475 546.8 383.79999999999995 622 247 622 C110.20000000000002 622 19 546.8 19 434 Z" fill="#e0503a"/><ellipse cx="144" cy="116" rx="37" ry="34" transform="rotate(-35 144 116)" fill="#188ea8"/><ellipse cx="352" cy="118" rx="36" ry="32" transform="rotate(35 352 118)" fill="#188ea8"/><ellipse cx="248" cy="183" rx="111" ry="98" fill="#188ea8"/><ellipse cx="253" cy="225" rx="59" ry="42" fill="#62b7c3"/><path d="M232.5 203 C232.5 187 274.5 187 274.5 203 C274.5 216 262.5 224 253.5 224 C244.5 224 232.5 216 232.5 203 Z" fill="#3d1b12"/><circle cx="204" cy="172" r="9" fill="#3d1b12"/><circle cx="295.5" cy="172" r="9" fill="#3d1b12"/><path d="M86.0 294.0 C82.0 273.0 93.0 248.0 117.0 241.0 C133.0 236.0 157.0 240.0 168.0 256.0 C171.0 264.0 165.0 270.0 158.0 269.0 C153.0 269.0 149.0 266.0 148.0 264.0 C149.0 276.0 143.0 288.0 132.0 289.0 C123.0 289.0 117.0 286.0 115.5 281.0 C116.0 294.0 110.0 302.0 100.0 302.0 C92.0 302.0 87.0 299.0 86.0 294.0 Z" fill="#188ea8"/><path d="M421.0 290.0 C425.0 269.0 414.0 244.0 390.0 237.0 C374.0 232.0 351.0 236.0 340.0 252.0 C337.0 260.0 343.0 266.5 350.0 266.0 C356.0 266.0 364.0 264.5 366.8 262.6 C366.0 274.0 372.0 284.5 383.0 285.0 C391.0 285.0 395.5 282.0 396.5 278.0 C396.0 290.0 402.0 298.0 411.0 298.0 C417.0 298.0 420.5 295.0 421.0 290.0 Z" fill="#188ea8"/><g fill="#b2c8ea"><ellipse cx="151" cy="133" rx="1.5" ry="2.0" transform="rotate(13 151 133)"/><ellipse cx="184" cy="220" rx="1.5" ry="2.0" transform="rotate(11 184 220)"/><ellipse cx="238" cy="177" rx="1.1" ry="2.9" transform="rotate(-2 238 177)"/><ellipse cx="234" cy="136" rx="1.1" ry="2.9" transform="rotate(-2 234 136)"/><ellipse cx="270" cy="109" rx="1.4" ry="2.9" transform="rotate(-5 270 109)"/><ellipse cx="336" cy="186" rx="1.6" ry="2.6" transform="rotate(-1 336 186)"/><ellipse cx="245" cy="174" rx="1.2" ry="1.8" transform="rotate(4 245 174)"/><ellipse cx="358" cy="140" rx="1.3" ry="2.2" transform="rotate(30 358 140)"/><ellipse cx="272" cy="155" rx="1.3" ry="2.0" transform="rotate(-8 272 155)"/><ellipse cx="179" cy="135" rx="1.4" ry="1.9" transform="rotate(5 179 135)"/><ellipse cx="333" cy="211" rx="1.7" ry="2.4" transform="rotate(19 333 211)"/><ellipse cx="234" cy="237" rx="1.2" ry="1.7" transform="rotate(27 234 237)"/><ellipse cx="145" cy="178" rx="1.2" ry="2.0" transform="rotate(20 145 178)"/><ellipse cx="378" cy="134" rx="1.5" ry="2.0" transform="rotate(12 378 134)"/><ellipse cx="218" cy="115" rx="1.1" ry="1.9" transform="rotate(26 218 115)"/><ellipse cx="247" cy="126" rx="1.6" ry="3.0" transform="rotate(8 247 126)"/><ellipse cx="148" cy="120" rx="1.1" ry="2.1" transform="rotate(-6 148 120)"/><ellipse cx="176" cy="134" rx="1.4" ry="2.8" transform="rotate(20 176 134)"/><ellipse cx="224" cy="166" rx="1.4" ry="2.1" transform="rotate(4 224 166)"/><ellipse cx="127" cy="138" rx="1.7" ry="1.8" transform="rotate(10 127 138)"/><ellipse cx="185" cy="132" rx="1.3" ry="2.2" transform="rotate(28 185 132)"/><ellipse cx="218" cy="273" rx="1.6" ry="3.0" transform="rotate(-0 218 273)"/><ellipse cx="140" cy="112" rx="1.4" ry="2.6" transform="rotate(28 140 112)"/><ellipse cx="308" cy="215" rx="1.3" ry="2.4" transform="rotate(-8 308 215)"/><ellipse cx="325" cy="128" rx="1.6" ry="2.5" transform="rotate(2 325 128)"/><ellipse cx="145" cy="132" rx="1.4" ry="2.6" transform="rotate(-6 145 132)"/><ellipse cx="270" cy="161" rx="1.2" ry="2.4" transform="rotate(-10 270 161)"/><ellipse cx="193" cy="176" rx="1.7" ry="2.5" transform="rotate(25 193 176)"/><ellipse cx="241" cy="129" rx="1.2" ry="2.9" transform="rotate(18 241 129)"/><ellipse cx="181" cy="219" rx="1.2" ry="1.6" transform="rotate(4 181 219)"/><ellipse cx="162" cy="126" rx="1.3" ry="2.5" transform="rotate(28 162 126)"/><ellipse cx="150" cy="162" rx="1.1" ry="3.0" transform="rotate(-4 150 162)"/><ellipse cx="124" cy="93" rx="1.3" ry="2.9" transform="rotate(25 124 93)"/><ellipse cx="293" cy="159" rx="1.3" ry="2.1" transform="rotate(-3 293 159)"/><ellipse cx="167" cy="154" rx="1.6" ry="2.8" transform="rotate(7 167 154)"/><ellipse cx="223" cy="249" rx="1.0" ry="1.6" transform="rotate(-7 223 249)"/><ellipse cx="363" cy="133" rx="1.5" ry="2.9" transform="rotate(4 363 133)"/><ellipse cx="280" cy="135" rx="1.5" ry="2.0" transform="rotate(1 280 135)"/><ellipse cx="174" cy="179" rx="1.7" ry="2.9" transform="rotate(5 174 179)"/><ellipse cx="179" cy="169" rx="1.3" ry="2.9" transform="rotate(-3 179 169)"/><ellipse cx="331" cy="234" rx="1.5" ry="2.5" transform="rotate(3 331 234)"/><ellipse cx="198" cy="155" rx="1.5" ry="1.7" transform="rotate(-2 198 155)"/><ellipse cx="317" cy="131" rx="1.0" ry="1.6" transform="rotate(12 317 131)"/><ellipse cx="174" cy="167" rx="1.4" ry="2.5" transform="rotate(20 174 167)"/><ellipse cx="341" cy="141" rx="1.4" ry="2.1" transform="rotate(20 341 141)"/><ellipse cx="165" cy="131" rx="1.2" ry="1.8" transform="rotate(25 165 131)"/><ellipse cx="269" cy="148" rx="1.3" ry="3.0" transform="rotate(10 269 148)"/><ellipse cx="174" cy="248" rx="1.7" ry="1.7" transform="rotate(9 174 248)"/><ellipse cx="191" cy="105" rx="1.1" ry="3.0" transform="rotate(13 191 105)"/><ellipse cx="348" cy="173" rx="1.2" ry="2.7" transform="rotate(28 348 173)"/><ellipse cx="280" cy="125" rx="1.3" ry="1.8" transform="rotate(-2 280 125)"/><ellipse cx="180" cy="205" rx="1.1" ry="1.6" transform="rotate(3 180 205)"/><ellipse cx="297" cy="119" rx="1.2" ry="1.9" transform="rotate(22 297 119)"/><ellipse cx="261" cy="93" rx="1.1" ry="2.2" transform="rotate(12 261 93)"/><ellipse cx="286" cy="99" rx="1.1" ry="2.6" transform="rotate(6 286 99)"/><ellipse cx="188" cy="144" rx="1.7" ry="2.0" transform="rotate(13 188 144)"/><ellipse cx="210" cy="121" rx="1.5" ry="1.9" transform="rotate(-10 210 121)"/><ellipse cx="336" cy="164" rx="1.6" ry="2.2" transform="rotate(-3 336 164)"/><ellipse cx="281" cy="157" rx="1.4" ry="1.8" transform="rotate(1 281 157)"/><ellipse cx="245" cy="247" rx="1.1" ry="1.8" transform="rotate(28 245 247)"/><ellipse cx="217" cy="268" rx="1.6" ry="1.8" transform="rotate(21 217 268)"/><ellipse cx="171" cy="164" rx="1.6" ry="2.8" transform="rotate(-3 171 164)"/><ellipse cx="170" cy="163" rx="1.4" ry="2.1" transform="rotate(-5 170 163)"/><ellipse cx="178" cy="231" rx="1.0" ry="2.4" transform="rotate(20 178 231)"/><ellipse cx="280" cy="182" rx="1.2" ry="2.7" transform="rotate(21 280 182)"/><ellipse cx="236" cy="117" rx="1.3" ry="1.7" transform="rotate(-5 236 117)"/><ellipse cx="228" cy="99" rx="1.3" ry="2.3" transform="rotate(-8 228 99)"/><ellipse cx="285" cy="97" rx="1.5" ry="2.7" transform="rotate(10 285 97)"/><ellipse cx="334" cy="120" rx="1.7" ry="2.3" transform="rotate(28 334 120)"/><ellipse cx="362" cy="114" rx="1.6" ry="2.9" transform="rotate(-7 362 114)"/><ellipse cx="357" cy="137" rx="1.6" ry="1.8" transform="rotate(10 357 137)"/><ellipse cx="363" cy="123" rx="1.2" ry="2.3" transform="rotate(3 363 123)"/><ellipse cx="120" cy="118" rx="1.1" ry="2.9" transform="rotate(17 120 118)"/><ellipse cx="356" cy="115" rx="1.5" ry="1.8" transform="rotate(11 356 115)"/><ellipse cx="285" cy="155" rx="1.6" ry="2.4" transform="rotate(13 285 155)"/><ellipse cx="353" cy="102" rx="1.7" ry="2.5" transform="rotate(6 353 102)"/><ellipse cx="329" cy="135" rx="1.7" ry="2.4" transform="rotate(4 329 135)"/><ellipse cx="320" cy="172" rx="1.1" ry="2.6" transform="rotate(-8 320 172)"/><ellipse cx="335" cy="133" rx="1.4" ry="3.0" transform="rotate(13 335 133)"/><ellipse cx="293" cy="145" rx="1.0" ry="1.6" transform="rotate(-4 293 145)"/><ellipse cx="279" cy="170" rx="1.4" ry="2.9" transform="rotate(-5 279 170)"/><ellipse cx="221" cy="135" rx="1.0" ry="2.5" transform="rotate(12 221 135)"/><ellipse cx="222" cy="129" rx="1.0" ry="2.7" transform="rotate(-10 222 129)"/><ellipse cx="195" cy="142" rx="1.0" ry="2.8" transform="rotate(21 195 142)"/><ellipse cx="172" cy="102" rx="1.2" ry="1.7" transform="rotate(3 172 102)"/><ellipse cx="316" cy="225" rx="1.5" ry="2.0" transform="rotate(12 316 225)"/><ellipse cx="183" cy="214" rx="1.2" ry="2.8" transform="rotate(-9 183 214)"/><ellipse cx="182" cy="129" rx="1.5" ry="2.9" transform="rotate(20 182 129)"/><ellipse cx="283" cy="224" rx="1.7" ry="2.3" transform="rotate(24 283 224)"/><ellipse cx="360" cy="110" rx="1.0" ry="1.7" transform="rotate(27 360 110)"/><ellipse cx="205" cy="110" rx="1.0" ry="1.7" transform="rotate(18 205 110)"/><ellipse cx="284" cy="225" rx="1.0" ry="2.4" transform="rotate(5 284 225)"/><ellipse cx="355" cy="94" rx="1.6" ry="2.9" transform="rotate(28 355 94)"/><ellipse cx="139" cy="123" rx="1.1" ry="1.6" transform="rotate(24 139 123)"/><ellipse cx="333" cy="212" rx="1.4" ry="2.0" transform="rotate(-6 333 212)"/><ellipse cx="166" cy="146" rx="1.3" ry="1.6" transform="rotate(0 166 146)"/><ellipse cx="249" cy="257" rx="1.0" ry="2.2" transform="rotate(7 249 257)"/><ellipse cx="323" cy="152" rx="1.5" ry="2.4" transform="rotate(-1 323 152)"/><ellipse cx="347" cy="99" rx="1.6" ry="1.8" transform="rotate(-10 347 99)"/><ellipse cx="166" cy="239" rx="1.0" ry="2.3" transform="rotate(10 166 239)"/><ellipse cx="329" cy="118" rx="1.3" ry="2.1" transform="rotate(23 329 118)"/><ellipse cx="188" cy="125" rx="1.5" ry="2.3" transform="rotate(-6 188 125)"/><ellipse cx="285" cy="97" rx="1.6" ry="2.6" transform="rotate(21 285 97)"/><ellipse cx="283" cy="154" rx="1.3" ry="2.2" transform="rotate(26 283 154)"/><ellipse cx="117" cy="123" rx="1.2" ry="2.9" transform="rotate(10 117 123)"/><ellipse cx="237" cy="191" rx="1.5" ry="2.7" transform="rotate(16 237 191)"/><ellipse cx="206" cy="148" rx="1.1" ry="2.8" transform="rotate(16 206 148)"/><ellipse cx="314" cy="115" rx="1.3" ry="2.7" transform="rotate(13 314 115)"/><ellipse cx="145" cy="176" rx="1.6" ry="1.9" transform="rotate(-2 145 176)"/><ellipse cx="193" cy="226" rx="1.1" ry="1.8" transform="rotate(-0 193 226)"/><ellipse cx="200" cy="189" rx="1.1" ry="2.1" transform="rotate(-2 200 189)"/><ellipse cx="312" cy="170" rx="1.1" ry="2.5" transform="rotate(-6 312 170)"/><ellipse cx="167" cy="161" rx="1.0" ry="2.2" transform="rotate(22 167 161)"/><ellipse cx="301" cy="184" rx="1.4" ry="2.2" transform="rotate(-4 301 184)"/><ellipse cx="276" cy="164" rx="1.5" ry="2.9" transform="rotate(7 276 164)"/><ellipse cx="173" cy="230" rx="1.5" ry="2.6" transform="rotate(24 173 230)"/><ellipse cx="225" cy="243" rx="1.4" ry="2.0" transform="rotate(7 225 243)"/><ellipse cx="160" cy="216" rx="1.3" ry="2.3" transform="rotate(29 160 216)"/><ellipse cx="126" cy="137" rx="1.3" ry="1.6" transform="rotate(7 126 137)"/><ellipse cx="183" cy="127" rx="1.5" ry="2.9" transform="rotate(11 183 127)"/><ellipse cx="168" cy="107" rx="1.5" ry="2.7" transform="rotate(15 168 107)"/><ellipse cx="207" cy="213" rx="1.6" ry="2.3" transform="rotate(2 207 213)"/><ellipse cx="261" cy="106" rx="1.6" ry="2.1" transform="rotate(24 261 106)"/><ellipse cx="184" cy="158" rx="1.2" ry="2.2" transform="rotate(-3 184 158)"/><ellipse cx="187" cy="131" rx="1.2" ry="2.3" transform="rotate(7 187 131)"/><ellipse cx="290" cy="132" rx="1.1" ry="1.8" transform="rotate(-1 290 132)"/><ellipse cx="323" cy="152" rx="1.1" ry="2.9" transform="rotate(22 323 152)"/><ellipse cx="277" cy="243" rx="1.6" ry="2.7" transform="rotate(24 277 243)"/><ellipse cx="314" cy="171" rx="1.6" ry="2.4" transform="rotate(1 314 171)"/><ellipse cx="174" cy="109" rx="1.3" ry="1.7" transform="rotate(9 174 109)"/><ellipse cx="150" cy="182" rx="1.3" ry="2.4" transform="rotate(25 150 182)"/><ellipse cx="278" cy="222" rx="1.2" ry="3.0" transform="rotate(10 278 222)"/><ellipse cx="347" cy="156" rx="1.3" ry="2.3" transform="rotate(21 347 156)"/><ellipse cx="168" cy="171" rx="1.3" ry="2.4" transform="rotate(23 168 171)"/><ellipse cx="249" cy="137" rx="1.4" ry="3.0" transform="rotate(16 249 137)"/><ellipse cx="328" cy="149" rx="1.2" ry="2.0" transform="rotate(13 328 149)"/><ellipse cx="260" cy="90" rx="1.2" ry="1.6" transform="rotate(-2 260 90)"/><ellipse cx="291" cy="244" rx="1.4" ry="2.5" transform="rotate(15 291 244)"/><ellipse cx="302" cy="204" rx="1.1" ry="2.5" transform="rotate(8 302 204)"/><ellipse cx="290" cy="157" rx="1.6" ry="2.7" transform="rotate(12 290 157)"/><ellipse cx="181" cy="143" rx="1.3" ry="2.0" transform="rotate(7 181 143)"/><ellipse cx="121" cy="105" rx="1.6" ry="2.4" transform="rotate(27 121 105)"/><ellipse cx="216" cy="203" rx="1.7" ry="2.3" transform="rotate(6 216 203)"/><ellipse cx="168" cy="112" rx="1.0" ry="1.6" transform="rotate(17 168 112)"/><ellipse cx="308" cy="130" rx="1.5" ry="1.9" transform="rotate(-8 308 130)"/><ellipse cx="323" cy="228" rx="1.5" ry="1.7" transform="rotate(15 323 228)"/><ellipse cx="366" cy="133" rx="1.7" ry="2.6" transform="rotate(-10 366 133)"/><ellipse cx="335" cy="97" rx="1.2" ry="2.6" transform="rotate(-3 335 97)"/><ellipse cx="347" cy="181" rx="1.0" ry="2.1" transform="rotate(13 347 181)"/><ellipse cx="329" cy="156" rx="1.5" ry="2.5" transform="rotate(7 329 156)"/><ellipse cx="216" cy="244" rx="1.5" ry="2.4" transform="rotate(2 216 244)"/><ellipse cx="298" cy="205" rx="1.6" ry="2.0" transform="rotate(-10 298 205)"/><ellipse cx="182" cy="168" rx="1.4" ry="2.7" transform="rotate(25 182 168)"/><ellipse cx="267" cy="137" rx="1.6" ry="2.7" transform="rotate(17 267 137)"/><ellipse cx="329" cy="122" rx="1.5" ry="2.9" transform="rotate(-1 329 122)"/><ellipse cx="167" cy="133" rx="1.5" ry="2.7" transform="rotate(8 167 133)"/><ellipse cx="322" cy="128" rx="1.4" ry="2.9" transform="rotate(25 322 128)"/><ellipse cx="254" cy="179" rx="1.4" ry="1.9" transform="rotate(-2 254 179)"/><ellipse cx="265" cy="164" rx="1.4" ry="1.8" transform="rotate(-8 265 164)"/><ellipse cx="327" cy="112" rx="1.4" ry="2.1" transform="rotate(11 327 112)"/><ellipse cx="165" cy="118" rx="1.1" ry="1.7" transform="rotate(12 165 118)"/><ellipse cx="349" cy="175" rx="1.7" ry="2.9" transform="rotate(-7 349 175)"/><ellipse cx="274" cy="163" rx="1.1" ry="2.9" transform="rotate(0 274 163)"/><ellipse cx="233" cy="113" rx="1.7" ry="3.0" transform="rotate(-1 233 113)"/><ellipse cx="121" cy="133" rx="1.2" ry="2.9" transform="rotate(26 121 133)"/><ellipse cx="326" cy="228" rx="1.7" ry="1.7" transform="rotate(-4 326 228)"/><ellipse cx="296" cy="142" rx="1.4" ry="2.7" transform="rotate(-6 296 142)"/><ellipse cx="199" cy="133" rx="1.1" ry="2.3" transform="rotate(-3 199 133)"/><ellipse cx="176" cy="110" rx="1.5" ry="1.6" transform="rotate(19 176 110)"/><ellipse cx="365" cy="126" rx="1.7" ry="2.8" transform="rotate(26 365 126)"/><ellipse cx="148" cy="173" rx="1.1" ry="2.9" transform="rotate(24 148 173)"/><ellipse cx="283" cy="174" rx="1.2" ry="2.8" transform="rotate(9 283 174)"/><ellipse cx="283" cy="110" rx="1.2" ry="1.7" transform="rotate(19 283 110)"/><ellipse cx="262" cy="110" rx="1.6" ry="2.0" transform="rotate(6 262 110)"/><ellipse cx="153" cy="136" rx="1.6" ry="2.1" transform="rotate(-3 153 136)"/><ellipse cx="245" cy="146" rx="1.6" ry="1.8" transform="rotate(29 245 146)"/><ellipse cx="294" cy="124" rx="1.3" ry="2.0" transform="rotate(0 294 124)"/><ellipse cx="165" cy="156" rx="1.7" ry="3.0" transform="rotate(27 165 156)"/><ellipse cx="137" cy="140" rx="1.6" ry="1.7" transform="rotate(19 137 140)"/><ellipse cx="204" cy="109" rx="1.0" ry="2.8" transform="rotate(11 204 109)"/><ellipse cx="161" cy="171" rx="1.6" ry="1.9" transform="rotate(13 161 171)"/><ellipse cx="148" cy="117" rx="1.5" ry="2.6" transform="rotate(-2 148 117)"/><ellipse cx="132" cy="98" rx="1.4" ry="2.3" transform="rotate(1 132 98)"/><ellipse cx="167" cy="207" rx="1.6" ry="2.4" transform="rotate(-2 167 207)"/><ellipse cx="333" cy="150" rx="1.6" ry="2.8" transform="rotate(10 333 150)"/><ellipse cx="211" cy="114" rx="1.3" ry="2.4" transform="rotate(-10 211 114)"/><ellipse cx="253" cy="173" rx="1.4" ry="1.8" transform="rotate(19 253 173)"/><ellipse cx="246" cy="187" rx="1.4" ry="2.4" transform="rotate(-9 246 187)"/><ellipse cx="376" cy="127" rx="1.1" ry="1.7" transform="rotate(0 376 127)"/><ellipse cx="303" cy="101" rx="1.6" ry="2.6" transform="rotate(-8 303 101)"/><ellipse cx="144" cy="183" rx="1.4" ry="2.0" transform="rotate(-5 144 183)"/><ellipse cx="222" cy="108" rx="1.4" ry="2.8" transform="rotate(-4 222 108)"/><ellipse cx="217" cy="167" rx="1.6" ry="2.3" transform="rotate(6 217 167)"/><ellipse cx="203" cy="130" rx="1.2" ry="2.2" transform="rotate(29 203 130)"/><ellipse cx="179" cy="168" rx="1.4" ry="2.1" transform="rotate(11 179 168)"/><ellipse cx="284" cy="248" rx="1.6" ry="1.6" transform="rotate(16 284 248)"/><ellipse cx="259" cy="272" rx="1.2" ry="2.3" transform="rotate(7 259 272)"/><ellipse cx="371" cy="140" rx="1.2" ry="2.5" transform="rotate(-5 371 140)"/><ellipse cx="251" cy="136" rx="1.3" ry="2.3" transform="rotate(-4 251 136)"/><ellipse cx="144" cy="107" rx="1.2" ry="2.2" transform="rotate(2 144 107)"/></g><g fill="#f6a77e"><ellipse cx="341" cy="366" rx="1.3" ry="1.8"/><ellipse cx="253" cy="347" rx="0.9" ry="1.6"/><ellipse cx="409" cy="311" rx="1.2" ry="1.5"/><ellipse cx="198" cy="361" rx="1.0" ry="1.5"/><ellipse cx="175" cy="339" rx="1.3" ry="2.2"/><ellipse cx="390" cy="380" rx="1.4" ry="2.1"/><ellipse cx="236" cy="445" rx="1.5" ry="1.4"/><ellipse cx="366" cy="397" rx="1.6" ry="1.9"/><ellipse cx="211" cy="445" rx="1.3" ry="1.7"/><ellipse cx="226" cy="365" rx="1.1" ry="1.7"/><ellipse cx="272" cy="347" rx="1.5" ry="2.2"/><ellipse cx="275" cy="394" rx="1.6" ry="1.8"/><ellipse cx="221" cy="406" rx="1.1" ry="1.8"/><ellipse cx="388" cy="295" rx="1.6" ry="2.2"/><ellipse cx="332" cy="454" rx="1.5" ry="1.7"/><ellipse cx="375" cy="328" rx="0.9" ry="1.6"/><ellipse cx="400" cy="397" rx="1.0" ry="1.8"/><ellipse cx="271" cy="318" rx="1.3" ry="2.4"/><ellipse cx="343" cy="340" rx="1.1" ry="1.3"/><ellipse cx="421" cy="396" rx="1.2" ry="1.9"/><ellipse cx="184" cy="299" rx="1.1" ry="1.9"/><ellipse cx="222" cy="458" rx="1.0" ry="1.6"/><ellipse cx="346" cy="345" rx="1.0" ry="2.3"/><ellipse cx="250" cy="309" rx="1.0" ry="2.0"/><ellipse cx="189" cy="313" rx="1.0" ry="2.2"/><ellipse cx="404" cy="332" rx="1.0" ry="1.9"/><ellipse cx="151" cy="352" rx="1.4" ry="2.3"/><ellipse cx="209" cy="414" rx="1.1" ry="2.2"/><ellipse cx="309" cy="297" rx="1.3" ry="2.1"/><ellipse cx="334" cy="349" rx="1.5" ry="1.5"/><ellipse cx="439" cy="422" rx="1.5" ry="2.0"/><ellipse cx="216" cy="378" rx="1.0" ry="2.1"/><ellipse cx="141" cy="387" rx="1.3" ry="1.9"/><ellipse cx="163" cy="286" rx="1.4" ry="1.5"/><ellipse cx="276" cy="335" rx="1.3" ry="2.1"/><ellipse cx="230" cy="441" rx="1.0" ry="1.5"/><ellipse cx="150" cy="301" rx="1.2" ry="1.3"/><ellipse cx="434" cy="411" rx="1.6" ry="2.0"/><ellipse cx="374" cy="456" rx="1.1" ry="1.4"/><ellipse cx="392" cy="331" rx="1.3" ry="1.6"/><ellipse cx="277" cy="407" rx="1.4" ry="2.3"/><ellipse cx="399" cy="463" rx="1.2" ry="1.5"/><ellipse cx="319" cy="379" rx="1.1" ry="1.7"/><ellipse cx="321" cy="455" rx="1.0" ry="1.6"/><ellipse cx="169" cy="366" rx="1.5" ry="2.2"/><ellipse cx="313" cy="326" rx="1.5" ry="1.2"/><ellipse cx="283" cy="355" rx="1.3" ry="1.7"/><ellipse cx="261" cy="315" rx="1.3" ry="1.5"/><ellipse cx="280" cy="281" rx="1.3" ry="1.3"/><ellipse cx="409" cy="388" rx="1.4" ry="1.3"/><ellipse cx="452" cy="391" rx="1.0" ry="2.1"/><ellipse cx="289" cy="305" rx="1.4" ry="1.7"/><ellipse cx="420" cy="405" rx="1.3" ry="2.3"/><ellipse cx="357" cy="337" rx="1.4" ry="2.2"/><ellipse cx="294" cy="277" rx="1.5" ry="1.3"/><ellipse cx="111" cy="362" rx="1.3" ry="1.3"/><ellipse cx="381" cy="298" rx="1.1" ry="2.0"/><ellipse cx="194" cy="288" rx="1.3" ry="2.0"/><ellipse cx="401" cy="349" rx="1.3" ry="1.3"/><ellipse cx="172" cy="306" rx="1.3" ry="1.3"/><ellipse cx="282" cy="348" rx="0.9" ry="1.9"/><ellipse cx="278" cy="382" rx="1.6" ry="1.2"/><ellipse cx="274" cy="442" rx="1.4" ry="2.0"/><ellipse cx="307" cy="342" rx="1.5" ry="2.2"/><ellipse cx="308" cy="339" rx="1.2" ry="1.3"/><ellipse cx="175" cy="332" rx="1.2" ry="1.6"/><ellipse cx="413" cy="364" rx="1.3" ry="1.6"/><ellipse cx="159" cy="329" rx="1.3" ry="2.3"/><ellipse cx="370" cy="358" rx="0.9" ry="1.8"/><ellipse cx="113" cy="433" rx="1.3" ry="1.3"/><ellipse cx="304" cy="335" rx="1.3" ry="1.5"/><ellipse cx="387" cy="357" rx="1.3" ry="1.9"/><ellipse cx="355" cy="316" rx="1.4" ry="2.1"/><ellipse cx="163" cy="442" rx="1.2" ry="1.5"/><ellipse cx="308" cy="337" rx="1.2" ry="1.6"/><ellipse cx="312" cy="351" rx="0.9" ry="1.9"/><ellipse cx="207" cy="478" rx="1.3" ry="1.5"/><ellipse cx="128" cy="303" rx="1.3" ry="1.6"/><ellipse cx="278" cy="291" rx="1.5" ry="1.5"/><ellipse cx="173" cy="372" rx="1.0" ry="2.0"/><ellipse cx="291" cy="364" rx="1.5" ry="1.5"/><ellipse cx="418" cy="341" rx="1.5" ry="1.4"/><ellipse cx="329" cy="275" rx="1.5" ry="2.1"/><ellipse cx="242" cy="286" rx="1.0" ry="2.0"/><ellipse cx="251" cy="353" rx="1.2" ry="1.2"/><ellipse cx="331" cy="413" rx="1.3" ry="2.0"/><ellipse cx="297" cy="345" rx="1.0" ry="1.3"/><ellipse cx="400" cy="445" rx="0.9" ry="2.0"/><ellipse cx="342" cy="349" rx="1.3" ry="2.0"/><ellipse cx="429" cy="369" rx="1.3" ry="1.8"/><ellipse cx="123" cy="288" rx="1.3" ry="1.8"/><ellipse cx="310" cy="456" rx="1.5" ry="1.3"/><ellipse cx="195" cy="457" rx="1.0" ry="1.4"/><ellipse cx="382" cy="381" rx="1.0" ry="1.7"/><ellipse cx="238" cy="449" rx="1.0" ry="2.0"/><ellipse cx="345" cy="320" rx="1.1" ry="2.2"/><ellipse cx="222" cy="343" rx="1.1" ry="1.7"/><ellipse cx="196" cy="395" rx="1.0" ry="2.4"/><ellipse cx="342" cy="344" rx="1.1" ry="1.3"/><ellipse cx="361" cy="346" rx="1.2" ry="2.3"/><ellipse cx="289" cy="366" rx="1.5" ry="1.7"/><ellipse cx="244" cy="378" rx="1.4" ry="2.1"/><ellipse cx="271" cy="441" rx="1.0" ry="1.5"/><ellipse cx="211" cy="396" rx="1.5" ry="2.2"/><ellipse cx="232" cy="373" rx="1.2" ry="2.2"/><ellipse cx="262" cy="353" rx="1.1" ry="1.5"/><ellipse cx="379" cy="324" rx="1.5" ry="1.9"/><ellipse cx="290" cy="297" rx="1.3" ry="2.2"/><ellipse cx="247" cy="418" rx="1.1" ry="1.5"/><ellipse cx="318" cy="316" rx="1.4" ry="1.4"/><ellipse cx="284" cy="331" rx="1.0" ry="2.3"/><ellipse cx="310" cy="308" rx="1.0" ry="1.8"/><ellipse cx="349" cy="358" rx="1.0" ry="2.2"/><ellipse cx="355" cy="297" rx="1.1" ry="1.3"/><ellipse cx="376" cy="399" rx="0.9" ry="1.8"/><ellipse cx="282" cy="339" rx="1.4" ry="1.4"/><ellipse cx="233" cy="293" rx="1.3" ry="1.6"/><ellipse cx="413" cy="376" rx="0.9" ry="2.3"/><ellipse cx="332" cy="309" rx="1.0" ry="1.5"/><ellipse cx="256" cy="325" rx="1.0" ry="1.9"/><ellipse cx="134" cy="400" rx="0.9" ry="1.9"/><ellipse cx="386" cy="366" rx="0.9" ry="2.3"/><ellipse cx="377" cy="371" rx="1.4" ry="2.3"/><ellipse cx="303" cy="460" rx="1.0" ry="2.1"/><ellipse cx="180" cy="293" rx="1.4" ry="2.1"/><ellipse cx="428" cy="436" rx="1.5" ry="1.9"/><ellipse cx="219" cy="455" rx="1.5" ry="1.6"/><ellipse cx="453" cy="383" rx="1.0" ry="2.4"/><ellipse cx="375" cy="315" rx="1.1" ry="1.4"/><ellipse cx="229" cy="311" rx="1.5" ry="2.0"/><ellipse cx="341" cy="349" rx="1.5" ry="2.0"/><ellipse cx="176" cy="399" rx="1.5" ry="1.2"/><ellipse cx="387" cy="356" rx="1.2" ry="1.6"/><ellipse cx="120" cy="340" rx="1.3" ry="1.6"/><ellipse cx="337" cy="361" rx="1.5" ry="1.3"/><ellipse cx="423" cy="350" rx="1.6" ry="1.8"/><ellipse cx="385" cy="314" rx="1.0" ry="1.9"/><ellipse cx="257" cy="419" rx="1.2" ry="1.6"/><ellipse cx="396" cy="420" rx="1.2" ry="2.1"/><ellipse cx="422" cy="432" rx="0.9" ry="1.6"/><ellipse cx="364" cy="324" rx="1.2" ry="2.4"/><ellipse cx="314" cy="450" rx="1.2" ry="2.4"/><ellipse cx="354" cy="295" rx="0.9" ry="1.6"/><ellipse cx="195" cy="490" rx="1.0" ry="1.6"/><ellipse cx="398" cy="409" rx="1.1" ry="1.4"/><ellipse cx="362" cy="368" rx="1.4" ry="2.1"/><ellipse cx="148" cy="342" rx="1.3" ry="1.5"/><ellipse cx="305" cy="317" rx="0.9" ry="2.2"/><ellipse cx="277" cy="340" rx="1.1" ry="1.5"/><ellipse cx="327" cy="354" rx="1.0" ry="1.6"/><ellipse cx="257" cy="417" rx="1.0" ry="1.6"/><ellipse cx="404" cy="417" rx="1.2" ry="1.9"/><ellipse cx="390" cy="412" rx="1.0" ry="2.0"/><ellipse cx="382" cy="341" rx="1.0" ry="2.2"/><ellipse cx="305" cy="287" rx="0.9" ry="1.7"/><ellipse cx="378" cy="304" rx="1.5" ry="1.8"/><ellipse cx="305" cy="431" rx="1.2" ry="1.8"/><ellipse cx="287" cy="308" rx="1.6" ry="2.2"/><ellipse cx="238" cy="286" rx="1.4" ry="2.1"/><ellipse cx="353" cy="379" rx="1.0" ry="2.0"/><ellipse cx="409" cy="430" rx="1.1" ry="1.6"/><ellipse cx="98" cy="408" rx="1.1" ry="1.3"/><ellipse cx="103" cy="340" rx="1.5" ry="1.7"/><ellipse cx="379" cy="370" rx="1.0" ry="1.3"/><ellipse cx="429" cy="427" rx="1.6" ry="1.7"/><ellipse cx="351" cy="347" rx="1.5" ry="1.4"/><ellipse cx="310" cy="303" rx="1.5" ry="1.7"/><ellipse cx="234" cy="351" rx="1.4" ry="1.5"/><ellipse cx="200" cy="446" rx="1.3" ry="2.1"/><ellipse cx="384" cy="293" rx="1.0" ry="2.1"/><ellipse cx="404" cy="389" rx="1.3" ry="1.9"/><ellipse cx="216" cy="280" rx="1.3" ry="1.6"/><ellipse cx="189" cy="327" rx="1.0" ry="1.9"/><ellipse cx="333" cy="400" rx="1.2" ry="1.7"/><ellipse cx="297" cy="412" rx="1.4" ry="2.2"/><ellipse cx="445" cy="361" rx="1.1" ry="1.6"/><ellipse cx="440" cy="440" rx="1.6" ry="2.1"/><ellipse cx="368" cy="443" rx="1.5" ry="1.8"/><ellipse cx="304" cy="343" rx="1.6" ry="1.4"/><ellipse cx="261" cy="412" rx="1.6" ry="1.7"/><ellipse cx="432" cy="422" rx="1.0" ry="1.5"/><ellipse cx="141" cy="428" rx="1.0" ry="1.7"/><ellipse cx="331" cy="422" rx="1.4" ry="1.5"/><ellipse cx="333" cy="304" rx="1.6" ry="2.0"/><ellipse cx="288" cy="414" rx="1.4" ry="1.6"/><ellipse cx="332" cy="362" rx="1.0" ry="2.3"/><ellipse cx="394" cy="308" rx="1.5" ry="2.0"/><ellipse cx="318" cy="397" rx="1.0" ry="1.4"/><ellipse cx="347" cy="287" rx="1.1" ry="1.6"/><ellipse cx="379" cy="323" rx="1.4" ry="1.5"/><ellipse cx="186" cy="368" rx="1.3" ry="1.3"/><ellipse cx="132" cy="295" rx="1.0" ry="1.3"/><ellipse cx="320" cy="342" rx="1.6" ry="1.8"/><ellipse cx="315" cy="289" rx="1.6" ry="2.1"/><ellipse cx="407" cy="343" rx="1.0" ry="1.5"/><ellipse cx="358" cy="396" rx="1.2" ry="2.0"/><ellipse cx="447" cy="374" rx="1.3" ry="1.5"/><ellipse cx="396" cy="302" rx="1.2" ry="1.5"/><ellipse cx="206" cy="337" rx="0.9" ry="1.6"/><ellipse cx="295" cy="316" rx="1.3" ry="2.1"/><ellipse cx="226" cy="353" rx="1.4" ry="2.2"/><ellipse cx="212" cy="383" rx="1.5" ry="2.0"/><ellipse cx="318" cy="397" rx="1.5" ry="2.4"/><ellipse cx="333" cy="316" rx="1.2" ry="1.8"/><ellipse cx="326" cy="271" rx="1.3" ry="1.8"/><ellipse cx="237" cy="419" rx="1.4" ry="1.4"/><ellipse cx="326" cy="292" rx="1.6" ry="2.1"/><ellipse cx="397" cy="410" rx="1.4" ry="2.4"/><ellipse cx="344" cy="309" rx="1.5" ry="1.3"/><ellipse cx="286" cy="300" rx="1.5" ry="2.1"/><ellipse cx="307" cy="312" rx="1.2" ry="1.8"/><ellipse cx="347" cy="307" rx="1.3" ry="2.0"/><ellipse cx="393" cy="428" rx="1.5" ry="1.6"/><ellipse cx="254" cy="290" rx="1.5" ry="1.8"/><ellipse cx="344" cy="383" rx="1.0" ry="1.3"/><ellipse cx="322" cy="307" rx="1.2" ry="2.1"/><ellipse cx="368" cy="344" rx="1.5" ry="2.3"/><ellipse cx="300" cy="279" rx="1.3" ry="1.5"/><ellipse cx="158" cy="270" rx="1.4" ry="1.7"/><ellipse cx="365" cy="357" rx="1.0" ry="1.5"/><ellipse cx="141" cy="434" rx="1.5" ry="1.8"/><ellipse cx="232" cy="428" rx="1.0" ry="1.4"/><ellipse cx="387" cy="336" rx="1.1" ry="1.8"/><ellipse cx="356" cy="337" rx="1.2" ry="2.2"/><ellipse cx="365" cy="402" rx="1.6" ry="1.6"/><ellipse cx="430" cy="354" rx="1.5" ry="2.1"/><ellipse cx="466" cy="431" rx="1.5" ry="1.5"/><ellipse cx="317" cy="346" rx="1.0" ry="1.8"/><ellipse cx="401" cy="461" rx="1.0" ry="2.3"/><ellipse cx="356" cy="419" rx="0.9" ry="2.2"/><ellipse cx="269" cy="365" rx="1.4" ry="2.1"/><ellipse cx="231" cy="351" rx="1.6" ry="1.6"/><ellipse cx="240" cy="355" rx="1.4" ry="1.4"/><ellipse cx="186" cy="342" rx="1.4" ry="1.3"/><ellipse cx="288" cy="359" rx="1.2" ry="1.3"/><ellipse cx="258" cy="454" rx="1.1" ry="1.5"/><ellipse cx="194" cy="427" rx="1.0" ry="1.6"/><ellipse cx="268" cy="376" rx="1.0" ry="2.3"/><ellipse cx="379" cy="298" rx="1.3" ry="2.1"/><ellipse cx="411" cy="342" rx="1.0" ry="1.2"/><ellipse cx="249" cy="473" rx="1.6" ry="1.8"/><ellipse cx="293" cy="316" rx="1.2" ry="1.8"/><ellipse cx="358" cy="427" rx="1.1" ry="2.2"/><ellipse cx="366" cy="313" rx="1.0" ry="1.7"/><ellipse cx="300" cy="327" rx="1.1" ry="1.3"/><ellipse cx="183" cy="407" rx="1.2" ry="1.7"/><ellipse cx="237" cy="334" rx="1.3" ry="2.1"/><ellipse cx="148" cy="334" rx="1.0" ry="2.0"/><ellipse cx="339" cy="296" rx="1.0" ry="1.6"/><ellipse cx="175" cy="350" rx="1.5" ry="2.3"/><ellipse cx="323" cy="393" rx="1.2" ry="2.4"/><ellipse cx="427" cy="447" rx="1.5" ry="2.4"/><ellipse cx="331" cy="331" rx="1.1" ry="1.9"/><ellipse cx="364" cy="393" rx="1.3" ry="1.7"/><ellipse cx="148" cy="281" rx="1.2" ry="2.1"/><ellipse cx="190" cy="478" rx="1.6" ry="1.7"/><ellipse cx="279" cy="451" rx="1.2" ry="2.2"/><ellipse cx="327" cy="266" rx="1.3" ry="2.1"/><ellipse cx="232" cy="368" rx="1.4" ry="1.6"/><ellipse cx="375" cy="314" rx="1.1" ry="2.3"/></g><text transform="translate(155.4 385.2) scale(.81 1)" x="0" y="0" textLength="209" lengthAdjust="spacing" font-family="Liberation Sans,sans-serif" font-weight="bold" font-size="55.500" fill="#f3ece2" stroke="#f3ece2" stroke-width="6" stroke-linejoin="miter">HAPPY</text><text transform="translate(108.7 446.9) scale(.818 1)" x="0" y="0" textLength="344.500" lengthAdjust="spacing" font-family="Liberation Sans,sans-serif" font-weight="bold" font-size="62" fill="#f3ece2" stroke="#f3ece2" stroke-width="6.500" stroke-linejoin="miter">BIRTHDAY</text></symbol></defs></svg><svg style="left:220px;top:52px" width="500" height="500"><use href="#art" width="500" height="500"/></svg></div>
<div class="abs" style="left:1012px;top:58px;width:266px;height:12px;background:#454545"></div>
<svg style="left:1035px;top:61px" width="8" height="6" viewBox="0 0 8 6"><path d="M3.500 0 V6 L0 3 Z M7.500 0 V6 L4 3 Z" fill="#c4c4c4"/></svg>
<svg style="left:1266px;top:61px" width="8" height="6" viewBox="0 0 8 6"><path d="M0 0 V6 L3.500 3 Z M4 0 V6 L7.500 3 Z" fill="#c4c4c4"/></svg>
<div id="hist" class="abs" style="left:814px;top:70px;width:197px;height:147px;background:#535353;box-shadow:0 0 0 1px #3a3a3a,0 3px 4px 1px rgba(30,30,30,.75)">
<div class="abs" style="left:0;top:0;width:197px;height:27px;background:#424242"></div>
<div class="abs" style="left:0;top:0;width:62px;height:27px;background:#535353"></div>
<span class="t" style="left:9px;top:7px;color:#e8e8e8">历史记录</span>
<svg style="left:158px;top:10px" width="10" height="8" viewBox="0 0 10 8"><path d="M1 1 L4 4 L1 7 M5.500 1 L8.500 4 L5.500 7" fill="none" stroke="#cfcfcf" stroke-width="1.400"/></svg>
<div class="abs" style="left:174px;top:8px;width:1px;height:12px;background:#6a6a6a"></div>
<svg style="left:181px;top:10px" width="10" height="8" viewBox="0 0 10 8"><path d="M0 1 H10 M0 4 H10 M0 7 H10" stroke="#bdbdbd" stroke-width="1.400"/></svg>
<div class="abs" style="left:0;top:28px;width:182px;height:26px;background:#535353;border-bottom:1px solid #474747"></div>
<svg style="left:4px;top:29px" width="16" height="16" viewBox="0 0 16 16"><path d="M13 2 L8 8" stroke="#d4d4d4" stroke-width="2.200" stroke-linecap="round"/><path d="M7 7.500 C4.500 8 4.500 11 2.500 13 C6 13.500 9 12 8.500 9 Z" fill="#d4d4d4"/><path d="M1.500 5.500 C3 3 5.500 2.500 7.500 3.500" fill="none" stroke="#d4d4d4" stroke-width="1" stroke-dasharray="1.500 1"/><circle cx="12.500" cy="9" r=".8" fill="#d4d4d4"/><circle cx="13.500" cy="12" r=".7" fill="#d4d4d4"/></svg>
<svg style="left:24px;top:31px;overflow:hidden" width="29" height="19" viewBox="0 185 500 315" preserveAspectRatio="none"><use href="#art" width="500" height="500"/></svg>
<span class="t" style="left:58px;top:28px;color:#dcdcdc;font-size:11.700px;clip-path:inset(3px 0 0 0)">去背景素材.jpg</span>
<div class="abs" style="left:0;top:56px;width:182px;height:22px;background:#535353"></div>
<div class="abs" style="left:5px;top:59px;width:13px;height:14px;border:1px solid #4b4b4b;border-left-color:transparent;border-top-color:transparent;background:#505050"></div>
<svg style="left:28px;top:58px" width="18" height="18" viewBox="0 0 18 18"><path d="M2.500 15.500 L10 8" stroke="#d4d4d4" stroke-width="2.600" stroke-linecap="round"/><g fill="#d4d4d4"><circle cx="12" cy="3.500" r=".9"/><circle cx="14.500" cy="7" r=".9"/><circle cx="8.500" cy="3" r=".8"/><circle cx="13" cy="10" r=".7"/><circle cx="15" cy="2.500" r=".6"/></g></svg>
<span class="t" style="left:55px;top:59px;color:#e2e2e2">魔棒</span>
<div class="abs" style="left:0;top:78px;width:182px;height:22px;background:#535353"></div>
<div class="abs" style="left:5px;top:81px;width:13px;height:14px;border:1px solid #4b4b4b;border-left-color:transparent;border-top-color:transparent;background:#505050"></div>
<svg style="left:30px;top:81px" width="14" height="15" viewBox="0 0 14 15"><path d="M1 1.500 H6.500 V3 H13 V14 H1 Z" fill="none" stroke="#d4d4d4" stroke-width="1.300"/><path d="M3 6 H11 M3 8.500 H11 M3 11 H11" stroke="#d4d4d4" stroke-width="1.300"/></svg>
<span class="t" style="left:55px;top:81px;color:#e2e2e2">选择反向</span>
<div class="abs" style="left:0;top:101px;width:182px;height:20px;background:#696969"></div>
<div class="abs" style="left:5px;top:104px;width:13px;height:14px;border:1px solid #5c5c5c;border-left-color:transparent;border-top-color:transparent;background:#626262"></div>
<svg style="left:30px;top:104px" width="14" height="15" viewBox="0 0 14 15"><path d="M1 1.500 H6.500 V3 H13 V14 H1 Z" fill="none" stroke="#d4d4d4" stroke-width="1.300"/><path d="M3 6 H11 M3 8.500 H11 M3 11 H11" stroke="#d4d4d4" stroke-width="1.300"/></svg>
<span class="t" style="left:55px;top:104px;color:#e2e2e2">通过拷贝的图层</span>
<div class="abs" style="left:182px;top:28px;width:15px;height:93px;background:#4d4d4d"></div>
<div class="abs" style="left:183px;top:56px;width:11px;height:50px;background:#6b6b6b"></div>
<svg style="left:185px;top:39px" width="8" height="5" viewBox="0 0 8 5"><path d="M.500 4.500 L4 1 L7.500 4.500" fill="none" stroke="#7a7a7a" stroke-width="1.300"/></svg>
<svg style="left:185px;top:109px" width="8" height="5" viewBox="0 0 8 5"><path d="M.500 .500 L4 4 L7.500 .500" fill="none" stroke="#8a8a8a" stroke-width="1.300"/></svg>
<svg style="left:100px;top:126px" width="16" height="15" viewBox="0 0 16 15"><path d="M6 2 H11 L14 5 V13 H6 Z" fill="#d4d4d4"/><path d="M11 2 V5 H14" fill="none" stroke="#535353" stroke-width="1"/><path d="M1 9 H9 M5 5.500 V12.500" stroke="#d4d4d4" stroke-width="2"/><path d="M1 9 H9 M5 5.500 V12.500" stroke="#535353" stroke-width="4" opacity="0"/></svg>
<svg style="left:131px;top:127px" width="15" height="13" viewBox="0 0 15 13"><path d="M1 3 H4 L5 1 H10 L11 3 H14 V12 H1 Z" fill="#d4d4d4"/><circle cx="7.500" cy="7.500" r="2.600" fill="#535353"/><circle cx="7.500" cy="7.500" r="1.300" fill="#d4d4d4"/></svg>
<svg style="left:158px;top:126px" width="12" height="15" viewBox="0 0 12 15"><path d="M1 3.500 H11 M4 3.500 V1.500 H8 V3.500" fill="none" stroke="#d4d4d4" stroke-width="1.300"/><path d="M2 5 H10 V14 H2 Z" fill="none" stroke="#d4d4d4" stroke-width="1.300"/><path d="M4.500 6.500 V12.500 M7.500 6.500 V12.500" stroke="#d4d4d4" stroke-width="1.100"/></svg>
<div class="abs" style="left:0;top:143px;width:197px;height:1px;background:#5e5e5e"></div>
</div>
<div id="iconcol" class="abs" style="top:70px;height:650px">
<div class="abs" style="left:5px;top:10.5px;width:25px;height:21px;background:#363636;border-radius:2px"></div>
<svg style="left:8px;top:12px" width="20" height="18" viewBox="0 0 20 18"><g fill="none" stroke="#d4d4d4" stroke-width="1"><rect x="1.500" y="1.500" width="3.500" height="3.500"/><rect x="1.500" y="7" width="3.500" height="3.500"/></g><rect x="1" y="12.500" width="4.500" height="4.500" fill="#d4d4d4"/><path d="M9 5.500 C13 2 17 6 14.500 11 L12 15.500" fill="none" stroke="#d4d4d4" stroke-width="1.800"/><path d="M7.500 2 L8 8 L13 5.500 Z" fill="#d4d4d4"/></svg>
<div class="abs" style="left:0;top:36px;width:36px;height:2px;background:#404040"></div>
<div class="abs" style="left:0;top:101px;width:36px;height:2px;background:#404040"></div>
<div class="abs" style="left:0;top:140px;width:36px;height:2px;background:#404040"></div>
<svg style="left:8px;top:50.5px" width="20" height="20" viewBox="0 0 20 20"><path d="M6.500 1.500 L11 3.500 V8.500 L6.500 10.500 L2 8.500 V3.500 Z" fill="none" stroke="#d4d4d4" stroke-width="1.200"/><path d="M2 3.500 L6.500 5.500 L11 3.500 M6.500 5.500 V10.500" fill="none" stroke="#d4d4d4" stroke-width="1"/><rect x="13" y="2" width="4" height="3.500" fill="#d4d4d4"/><rect x="13" y="7" width="4" height="3.500" fill="#d4d4d4"/><rect x="2" y="13" width="15" height="4.500" fill="#d4d4d4"/></svg>
<svg style="left:8px;top:76px" width="20" height="20" viewBox="0 0 20 20"><circle cx="10" cy="10" r="7.800" fill="none" stroke="#d4d4d4" stroke-width="1.500"/><circle cx="10" cy="6" r="1.200" fill="#d4d4d4"/><path d="M10 8.500 V14.500" stroke="#d4d4d4" stroke-width="1.800"/></svg>
<svg style="left:8px;top:113px" width="22" height="22" viewBox="0 0 22 22"><path d="M2.500 3.500 L10 2 L12 14.500 L4.500 16 Z" fill="none" stroke="#d4d4d4" stroke-width="1.300"/><path d="M11 8 L18 7.500 L19.500 19 L12 19.500 Z" fill="none" stroke="#d4d4d4" stroke-width="1.300"/><path d="M3 4 L12 14 M12 9 L19 18.500" stroke="#d4d4d4" stroke-width="1.100"/></svg>
<svg style="left:6px;top:152px" width="25" height="29" viewBox="0 0 24 24" preserveAspectRatio="none"><path d="M4 20.500 L17 7" stroke="#d4d4d4" stroke-width="2" stroke-linecap="round"/><path d="M20 21 L8 8.500" stroke="#d4d4d4" stroke-width="2" stroke-linecap="round"/><path d="M16 8 L20 2 L22 4 Z" fill="#d4d4d4"/><path d="M3 2 C7 3 10 6 8.500 9.500 C6 10.500 3 8 3 2 Z" fill="#d4d4d4"/></svg>
</div>
<div id="right" class="abs" style="top:70px;height:650px">
<div class="ptabbar" style="top:0"></div>
<div class="ptab" style="left:0;width:39px">颜色</div>
<div class="ptabi" style="left:49px">色板</div>
<svg style="left:213px;top:9px" width="10" height="8" viewBox="0 0 10 8"><path d="M0 1 H10 M0 4 H10 M0 7 H10" stroke="#b4b4b4" stroke-width="1.400"/></svg>
<div class="abs" style="left:19px;top:44px;width:17px;height:18px;background:#fff;box-shadow:0 0 0 1px #4a4a4a"></div>
<div class="abs" style="left:10px;top:36px;width:17px;height:17px;background:#dcc4c1;border:1px solid #f2f2f2;box-shadow:0 0 0 1px #3c3c3c"></div>
<div class="abs" style="left:42px;top:32px;width:138px;height:170px;background:linear-gradient(to bottom,rgba(0,0,0,0),#000),linear-gradient(to right,#fff,#ff2a00)"></div>
<div class="abs" style="left:61px;top:48px;width:11px;height:11px;border:1.500px solid #5a3a3a;border-radius:50%"></div>
<div class="abs" style="left:196px;top:32px;width:18px;height:170px;background:linear-gradient(to bottom,#ff0000 0%,#ff00ff 17%,#0000ff 33%,#00ffff 50%,#00ff00 67%,#ffff00 83%,#ff0000 100%)"></div>
<svg style="left:187px;top:191px" width="7" height="8" viewBox="0 0 7 8"><path d="M0 0 L6.500 4 L0 8 Z" fill="#efefef"/></svg>
<div class="abs" style="left:0;top:207px;width:228px;height:4px;background:#3c3c3c"></div>
<div class="ptabbar" style="top:211px;height:27px"></div>
<div class="ptab" style="left:0;top:211px;width:36px;height:27px;line-height:27px;text-align:left;padding-left:9px">库</div>
<div class="ptabi" style="left:45px;top:211px;height:27px;line-height:27px">调整</div>
<svg style="left:213px;top:220px" width="10" height="8" viewBox="0 0 10 8"><path d="M0 1 H10 M0 4 H10 M0 7 H10" stroke="#b4b4b4" stroke-width="1.400"/></svg>
<div class="abs" style="left:9px;top:246px;width:158px;height:17px;background:#4e4e4e;border-radius:2px"></div>
<svg style="left:155px;top:251px" width="10" height="6" viewBox="0 0 10 6"><path d="M1 1 L5 5 L9 1" fill="none" stroke="#666" stroke-width="1.400"/></svg>
<div class="abs" style="left:176px;top:243px;width:20px;height:21px;background:#333;border-radius:2px"></div>
<svg style="left:180px;top:248px" width="12" height="12" viewBox="0 0 12 12"><g fill="#e6dede"><rect x="0" y="0" width="5.300" height="5.300"/><rect x="6.500" y="0" width="5.300" height="5.300"/><rect x="0" y="6.500" width="5.300" height="5.300"/><rect x="6.500" y="6.500" width="5.300" height="5.300"/></g></svg>
<svg style="left:204px;top:248px" width="12" height="12" viewBox="0 0 12 12"><path d="M0 1.500 H12 M0 4.500 H12 M0 7.500 H12 M0 10.500 H12" stroke="#dcdcdc" stroke-width="1.500"/></svg>
<div class="abs" style="left:4px;top:267px;width:220px;height:27px;background:#565656"></div>
<svg style="left:6px;top:274px" width="12" height="12" viewBox="0 0 12 12"><circle cx="7" cy="4.800" r="3.300" fill="none" stroke="#e0e0e0" stroke-width="1.500"/><path d="M4.500 7.300 L1.500 10.500" stroke="#e0e0e0" stroke-width="1.900" stroke-linecap="round"/></svg>
<svg style="left:209px;top:277px" width="10" height="6" viewBox="0 0 10 6"><path d="M1 1 L5 5 L9 1" fill="none" stroke="#6a6a6a" stroke-width="1.400"/></svg>
<svg style="left:91px;top:303px" width="50" height="38" viewBox="0 0 50 38"><g fill="none" stroke="#6f6f6f" stroke-width="4.300"><path d="M30 31 H14 C-1 31 -1 8.500 14 8.500 C19 8.500 22 11 25 14.500 L33 23"/><path d="M21 9 C24 -1 44 -1 44.500 11 C45 16 43 19 40 21"/><path d="M11 22 C12.500 16.500 19 16.500 21.500 20 L27 26"/></g><path d="M31.500 23 L44 35 M44 23 L31.500 35" stroke="#6f6f6f" stroke-width="4"/></svg>
<div class="abs" style="left:0;top:345px;width:228px;text-align:center;font-size:10.200px;line-height:14.300px;color:#8c8c8c;padding-right:3px">要使用 Creative Cloud Libraries,<br>请安装 Creative Cloud 应用程序</div>
<div class="abs" style="left:0;top:389px;width:224px;height:7px;overflow:hidden;text-align:center"><span style="position:relative;top:-3px;font-size:11px;font-weight:bold;color:#fff;line-height:14px">立即获取!</span></div>
<div class="abs" style="left:0;top:396px;width:228px;height:1px;background:#494949"></div>
<svg style="left:172px;top:402px" width="18" height="14" viewBox="0 0 18 14"><g fill="none" stroke="#bdbdbd" stroke-width="1.600"><path d="M5 11.500 C1 11.500 .500 7 4 6 C4.500 2 9.500 1 11.500 4 C15 3 17.500 6.500 16 9"/><path d="M4 8.500 C5 5.500 8.500 5.500 9.500 7.500 L11.500 10"/></g><path d="M12.500 9.500 L16.500 13.500 M16.500 9.500 L12.500 13.500" stroke="#e0e0e0" stroke-width="1.500"/></svg>
<svg style="left:198px;top:402px" width="11" height="14" viewBox="0 0 12 15"><path d="M1 3.500 H11 M4 3.500 V1.500 H8 V3.500" fill="none" stroke="#777" stroke-width="1.300"/><path d="M2 5 H10 V14 H2 Z" fill="none" stroke="#777" stroke-width="1.300"/><path d="M4.500 6.500 V12.500 M7.500 6.500 V12.500" stroke="#777" stroke-width="1.100"/></svg>
<div class="abs" style="left:0;top:419px;width:228px;height:4px;background:#3c3c3c"></div>
<div class="ptabbar" style="top:423px"></div>
<div class="ptab" style="left:0;top:423px;width:41px">图层</div>
<div class="ptabi" style="left:50px;top:423px">通道</div>
<div class="ptabi" style="left:91px;top:423px">路径</div>
<svg style="left:213px;top:431px" width="10" height="8" viewBox="0 0 10 8"><path d="M0 1 H10 M0 4 H10 M0 7 H10" stroke="#b4b4b4" stroke-width="1.400"/></svg>
<div class="field" style="left:4px;top:456px;width:82px;height:18px;border-color:#4a4a4a;background:#464646"></div>
<svg style="left:9px;top:459px" width="12" height="12" viewBox="0 0 12 12"><circle cx="7" cy="4.800" r="3.200" fill="none" stroke="#e0e0e0" stroke-width="1.400"/><path d="M4.500 7.300 L1.500 10.500" stroke="#e0e0e0" stroke-width="1.800" stroke-linecap="round"/></svg>
<span class="t" style="left:25px;top:458px;font-size:11px;color:#e4e4e4">类型</span>
<svg style="left:74px;top:462px" width="9" height="6" viewBox="0 0 9 6"><path d="M1 1 L4.500 4.500 L8 1" fill="none" stroke="#a0a0a0" stroke-width="1.300"/></svg>
<svg style="left:99px;top:459px" width="12" height="10" viewBox="0 0 12 10"><rect x=".700" y=".700" width="10.600" height="8.600" fill="none" stroke="#d4d4d4" stroke-width="1.300"/><path d="M2.500 7.500 L5 4.500 L7 6.500 L8 5.500 L9.500 7.500 Z" fill="#d4d4d4"/></svg>
<svg style="left:122px;top:458px" width="12" height="12" viewBox="0 0 12 12"><circle cx="6" cy="6" r="4.800" fill="none" stroke="#d4d4d4" stroke-width="1.300"/><path d="M2.600 9.400 A4.800 4.800 0 0 0 9.400 2.600 Z" fill="#d4d4d4"/></svg>
<span class="t" style="left:146px;top:457px;font-family:Liberation Serif,serif;font-weight:bold;font-size:14px;color:#d4d4d4">T</span>
<svg style="left:167px;top:458px" width="12" height="12" viewBox="0 0 12 12"><rect x="2" y="2" width="8" height="8" fill="none" stroke="#d4d4d4" stroke-width="1.200"/><g fill="#d4d4d4"><rect x="0" y="0" width="3.500" height="3.500"/><rect x="8.500" y="0" width="3.500" height="3.500"/><rect x="0" y="8.500" width="3.500" height="3.500"/><rect x="8.500" y="8.500" width="3.500" height="3.500"/></g></svg>
<svg style="left:190px;top:457px" width="12" height="13" viewBox="0 0 12 13"><path d="M1 1 H7.500 L11 4.500 V12 H1 Z" fill="none" stroke="#d4d4d4" stroke-width="1.300"/><rect x="3.500" y="6.500" width="5" height="5.500" fill="#d4d4d4"/></svg>
<div class="abs" style="left:217px;top:457px;width:8px;height:8px;border-radius:50%;background:#d0d0d0"></div><div class="abs" style="left:219px;top:465px;width:4px;height:6px;background:#3a3a3a"></div>
<div class="field" style="left:4px;top:481px;width:110px;height:19px;border-color:#4a4a4a;background:#464646"></div>
<span class="t" style="left:11px;top:484px;font-size:11px;color:#e4e4e4">正常</span>
<svg style="left:102px;top:488px" width="9" height="6" viewBox="0 0 9 6"><path d="M1 1 L4.500 4.500 L8 1" fill="none" stroke="#a0a0a0" stroke-width="1.300"/></svg>
<span class="t" style="left:121px;top:484px;font-size:11.800px;color:#dcdcdc">不透明度:</span>
<div class="field" style="left:175px;top:481px;width:36px;height:19px;border-color:#4a4a4a;background:#464646"></div>
<span class="t" style="left:177px;top:484px;font-size:11px;color:#e4e4e4">100%</span>
<div class="field" style="left:212px;top:481px;width:13px;height:19px;border-color:#4a4a4a;background:#464646"></div>
<svg style="left:214px;top:488px" width="9" height="6" viewBox="0 0 9 6"><path d="M1 1 L4.500 4.500 L8 1" fill="none" stroke="#a0a0a0" stroke-width="1.300"/></svg>
<span class="t" style="left:6px;top:509px;font-size:11.600px;color:#dcdcdc">锁定:</span>
<svg style="left:41px;top:510px" width="12" height="12" viewBox="0 0 12 12"><rect x=".600" y=".600" width="10.800" height="10.800" fill="none" stroke="#d4d4d4" stroke-width="1.200"/><g fill="#d4d4d4"><rect x="1" y="1" width="3.300" height="3.300"/><rect x="7.600" y="1" width="3.300" height="3.300"/><rect x="4.300" y="4.300" width="3.300" height="3.300"/><rect x="1" y="7.600" width="3.300" height="3.300"/><rect x="7.600" y="7.600" width="3.300" height="3.300"/></g></svg>
<svg style="left:61px;top:509px" width="13" height="14" viewBox="0 0 13 14"><path d="M11.500 1.500 L6.500 7" stroke="#d4d4d4" stroke-width="2" stroke-linecap="round"/><path d="M5.500 6.500 C3 7 3 10 1 12.500 C4.500 13 7.500 11.500 7 8.500 Z" fill="#d4d4d4"/></svg>
<svg style="left:81px;top:509px" width="14" height="14" viewBox="0 0 14 14"><path d="M7 0 L9.300 2.800 H7.800 V6.200 H11.200 V4.700 L14 7 L11.200 9.300 V7.800 H7.800 V11.200 H9.300 L7 14 L4.700 11.200 H6.200 V7.800 H2.800 V9.300 L0 7 L2.800 4.700 V6.200 H6.200 V2.800 H4.700 Z" fill="#d4d4d4"/></svg>
<svg style="left:101px;top:509px" width="14" height="14" viewBox="0 0 14 14"><path d="M3.500 0 V11 H14 M0 3.500 H11 V14" fill="none" stroke="#d4d4d4" stroke-width="1.400"/><path d="M11 0 V2 M12.500 3.500 H14" stroke="#d4d4d4" stroke-width="1.200"/></svg>
<svg style="left:124px;top:509px" width="11" height="13" viewBox="0 0 11 13"><path d="M2.800 6 V4 C2.800 .500 8.200 .500 8.200 4 V6" fill="none" stroke="#d4d4d4" stroke-width="1.500"/><rect x=".500" y="5.500" width="10" height="7.500" rx="1" fill="#d4d4d4"/></svg>
<span class="t" style="left:144px;top:509px;font-size:11.600px;color:#dcdcdc">填充:</span>
<div class="field" style="left:175px;top:506px;width:36px;height:19px;border-color:#4a4a4a;background:#464646"></div>
<span class="t" style="left:177px;top:509px;font-size:11px;color:#e4e4e4">100%</span>
<div class="field" style="left:212px;top:506px;width:13px;height:19px;border-color:#4a4a4a;background:#464646"></div>
<svg style="left:214px;top:513px" width="9" height="6" viewBox="0 0 9 6"><path d="M1 1 L4.500 4.500 L8 1" fill="none" stroke="#a0a0a0" stroke-width="1.300"/></svg>
<div class="abs" style="left:4px;top:528px;width:212px;height:1px;background:#4b4b4b"></div>
<div class="abs" style="left:29px;top:530px;width:187px;height:35px;background:#6b6b6b"></div>
<svg style="left:7px;top:543px" width="14" height="10" viewBox="0 0 14 10"><path d="M.500 5 C3 .500 11 .500 13.500 5 C11 9.500 3 9.500 .500 5 Z" fill="#d4d4d4"/><circle cx="7" cy="5" r="2.600" fill="#535353"/><circle cx="7" cy="5" r="1.300" fill="#d4d4d4"/></svg>
<div class="abs" style="left:31px;top:532px;width:33px;height:32px;background:#fff;background-image:conic-gradient(#d4d4d4 25%,#fff 0 50%,#d4d4d4 0 75%,#fff 0);background-size:8px 8px"></div>
<svg style="left:32px;top:533px" width="31" height="30" viewBox="0 0 500 500" preserveAspectRatio="none"><g clip-path="url(#nobg)"><use href="#art" width="500" height="500"/></g></svg>
<svg style="left:29px;top:530px" width="37" height="36" viewBox="0 0 37 36"><path d="M1 9 V1 H9 M28 1 H36 V9 M36 27 V35 H28 M9 35 H1 V27" fill="none" stroke="#f0f0f0" stroke-width="1.500"/></svg>
<span class="t" style="left:71px;top:541px;color:#f0f0f0">图层 1</span>
<svg style="left:7px;top:580px" width="14" height="10" viewBox="0 0 14 10"><path d="M.500 5 C3 .500 11 .500 13.500 5 C11 9.500 3 9.500 .500 5 Z" fill="#d4d4d4"/><circle cx="7" cy="5" r="2.600" fill="#535353"/><circle cx="7" cy="5" r="1.300" fill="#d4d4d4"/></svg>
<svg style="left:33px;top:570px;background:#fff" width="29" height="29" viewBox="0 0 500 500"><use href="#art" width="500" height="500"/></svg>
<span class="t" style="left:71px;top:578px;color:#f0f0f0">背景</span>
<svg style="left:189px;top:578px" width="10" height="12" viewBox="0 0 10 12"><path d="M2.800 5.500 V3.500 C2.800 .800 7.200 .800 7.200 3.500 V5.500" fill="none" stroke="#d4d4d4" stroke-width="1.200"/><rect x=".800" y="5.300" width="8.400" height="6" fill="none" stroke="#d4d4d4" stroke-width="1.200"/><rect x="4.300" y="7.300" width="1.400" height="2" fill="#d4d4d4"/></svg>
<div class="abs" style="left:4px;top:602px;width:212px;height:1px;background:#474747"></div>
<div class="abs" style="left:216px;top:529px;width:12px;height:96px;background:#4a4a4a"></div>
<svg style="left:38px;top:632px" width="15" height="9" viewBox="0 0 15 9"><rect x="1" y="1.500" width="7.500" height="6" rx="3" fill="none" stroke="#7c7c7c" stroke-width="1.500"/><rect x="6.500" y="1.500" width="7.500" height="6" rx="3" fill="none" stroke="#7c7c7c" stroke-width="1.500"/></svg>
<span class="t" style="left:65px;top:629px;font-style:italic;font-size:13px;color:#d4d4d4;font-family:Liberation Serif,serif;font-weight:bold">fx</span>
<svg style="left:89px;top:631px" width="13" height="11" viewBox="0 0 13 11"><rect width="13" height="11" fill="#d4d4d4"/><circle cx="6.500" cy="5.500" r="3.200" fill="#535353"/></svg>
<svg style="left:115px;top:630px" width="13" height="13" viewBox="0 0 12 12"><circle cx="6" cy="6" r="4.800" fill="none" stroke="#d4d4d4" stroke-width="1.300"/><path d="M2.600 9.400 A4.800 4.800 0 0 0 9.400 2.600 Z" fill="#d4d4d4"/></svg>
<svg style="left:140px;top:631px" width="13" height="11" viewBox="0 0 13 11"><path d="M0 1 H5 L6.500 2.500 H13 V11 H0 Z" fill="#d4d4d4"/></svg>
<svg style="left:165px;top:630px" width="13" height="13" viewBox="0 0 13 13"><path d="M1 1 H12 V8 L8 12 H1 Z" fill="none" stroke="#d4d4d4" stroke-width="1.400"/><path d="M12 8 H8 V12" fill="none" stroke="#d4d4d4" stroke-width="1.200"/></svg>
<svg style="left:191px;top:629px" width="12" height="15" viewBox="0 0 12 15"><path d="M1 3.500 H11 M4 3.500 V1.500 H8 V3.500" fill="none" stroke="#d4d4d4" stroke-width="1.300"/><path d="M2 5 H10 V14 H2 Z" fill="none" stroke="#d4d4d4" stroke-width="1.300"/><path d="M4.500 6.500 V12.500 M7.500 6.500 V12.500" stroke="#d4d4d4" stroke-width="1.100"/></svg>
<svg style="left:77px;top:643px" width="5" height="3" viewBox="0 0 5 3"><path d="M0 0 H5 L2.500 3 Z" fill="#c8c8c8"/></svg>
<svg style="left:128px;top:643px" width="5" height="3" viewBox="0 0 5 3"><path d="M0 0 H5 L2.500 3 Z" fill="#c8c8c8"/></svg>
<div class="abs" style="left:213px;top:606px;width:42px;height:42px;border-radius:50%;background:#896c50;border:2px solid #9d8062;opacity:.9"></div>
<svg style="left:71px;top:547px" width="16" height="18" viewBox="0 0 16 18"><path d="M5 1.500 C5 .300 7 .300 7 1.500 V7 L8 7 V6 C8 5 9.800 5 9.800 6 V7.500 C9.800 6.300 11.600 6.300 11.600 7.500 V8.500 C11.600 7.500 13.300 7.500 13.300 8.700 V12 C13.300 15 12 17 9.500 17 H8 C6 17 5 15.500 3.500 13.500 L1.500 10.500 C1 9.500 2.500 8.800 3.300 9.800 L5 11.500 Z" fill="#fff" stroke="#111" stroke-width="1"/></svg>
</div>
<div class="abs" style="left:0;top:718px;width:1278px;height:2px;background:#3a3a3a"></div>
<svg width="0" height="0" style="left:0;top:0"><defs><clipPath id="nobg"><ellipse cx="247" cy="433" rx="228" ry="186"/><ellipse cx="248" cy="183" rx="113" ry="100"/><circle cx="144" cy="116" r="38"/><circle cx="352" cy="118" r="37"/><rect x="85" y="235" width="90" height="70"/><rect x="340" y="232" width="85" height="70"/></clipPath></defs></svg>
</body>
</html>
